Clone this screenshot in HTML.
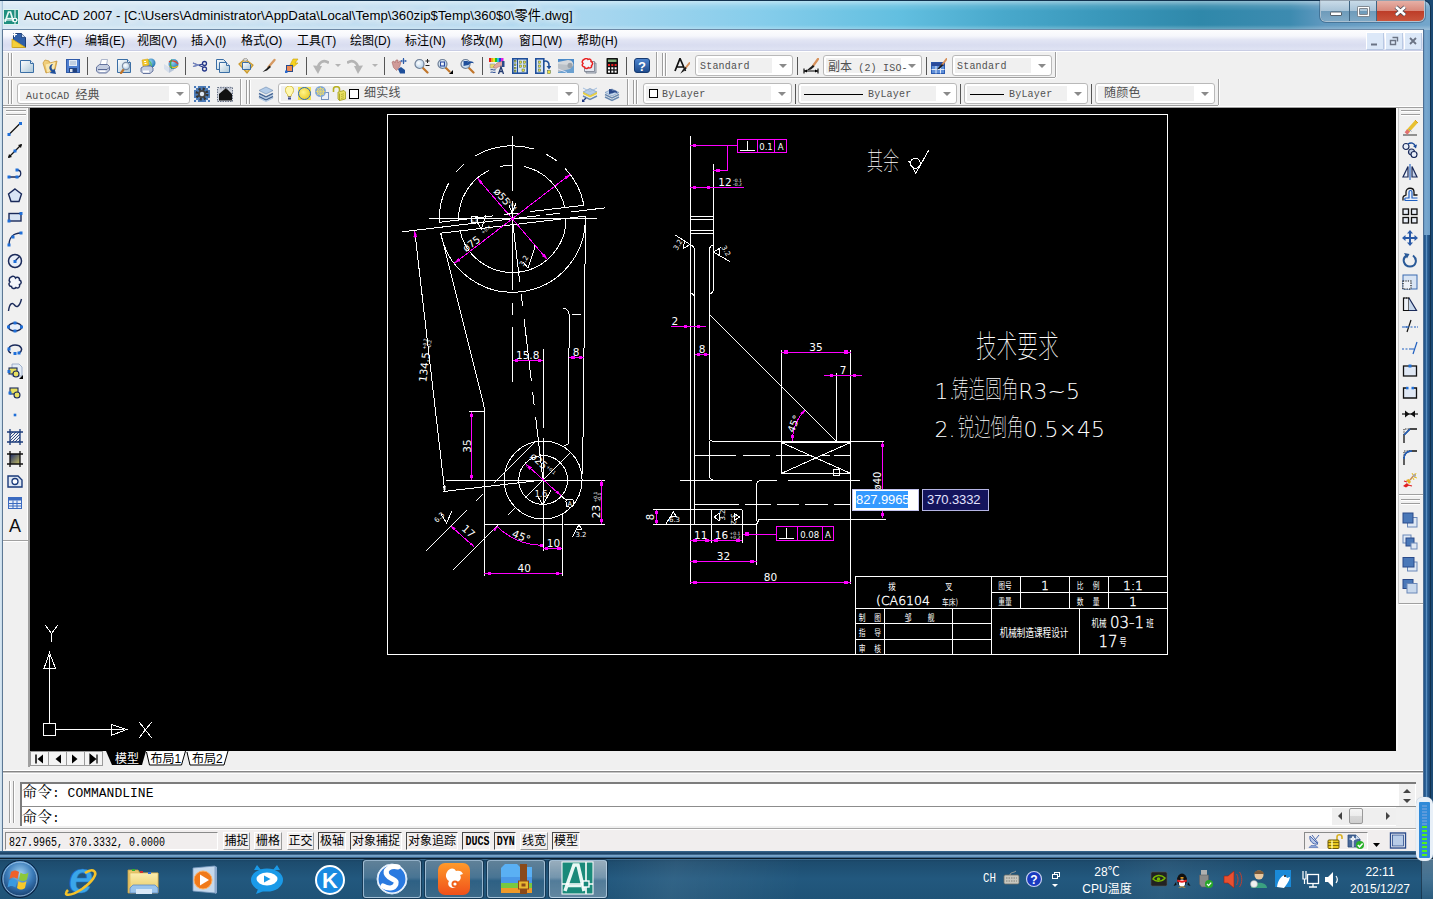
<!DOCTYPE html>
<html><head><meta charset="utf-8"><title>AutoCAD 2007</title>
<style>
html,body{margin:0;padding:0}
body{width:1433px;height:899px;position:relative;overflow:hidden;background:#1b4a74;font-family:"Liberation Sans","Noto Sans CJK SC",sans-serif;font-size:12px;color:#000}
.a{position:absolute}
.a svg{display:block}
#win{left:0;top:1px;width:1430px;height:857px;background:#6d9fc9;border-radius:0 7px 0 0;box-shadow:0 0 0 1px #12324f}
#title{left:0;top:1px;width:1430px;height:29px;border-radius:0 7px 0 0;
 background:linear-gradient(180deg,rgba(255,255,255,.45) 0,rgba(255,255,255,.12) 5px,rgba(255,255,255,0) 10px,rgba(255,255,255,0) 24px,rgba(255,255,255,.25) 28px),linear-gradient(90deg,#d6e7f3 0,#cde3f2 160px,#bddcf0 420px,#a6d6ef 600px,#86cdeb 760px,#62bfe0 900px,#49a9cc 1000px,#3a98bb 1100px,#2f88aa 1200px,#3d8bb0 1290px,#6199c0 1325px,#74a6cb 1430px)}
#titletxt{text-shadow:0 0 6px rgba(255,255,255,.9),0 0 10px rgba(255,255,255,.8),0 0 14px rgba(255,255,255,.6);left:24px;top:5px;font-size:13.25px;white-space:nowrap;color:#000;letter-spacing:0}
#client{left:3px;top:30px;width:1420px;height:821px;background:#f0f0f0}
#menubar{left:3px;top:30px;width:1420px;height:20px;background:linear-gradient(180deg,#fdfdfe 0,#f6f7fc 30%,#e2e5f4 50%,#d9ddf0 75%,#dfe3f3 100%);border-bottom:1px solid #c9cde4}
.mi{top:31px;font-size:12px;white-space:nowrap;color:#000}
#canvas{left:30px;top:108px;width:1366px;height:643px;background:#000}
.tbtxt{margin-top:1px;font-family:"Liberation Mono","Noto Sans CJK SC",monospace;font-size:10px;line-height:14px;letter-spacing:.2px;color:#505050;white-space:nowrap}
.cj{font-size:12px;letter-spacing:0;font-family:"Liberation Sans","Noto Sans CJK SC",sans-serif}
.combo{background:#fff;border:1px solid #b9b9b9;border-radius:3px;box-sizing:border-box;height:21px}
.combo .arr{position:absolute;right:5px;top:8px;width:0;height:0;border-left:4px solid transparent;border-right:4px solid transparent;border-top:4px solid #8a8a8a}
.combo .pad{position:absolute;left:2px;top:2px;bottom:2px;right:20px;background:#f0f0f0}
.vsep{width:1px;background:#555}
.grip{width:1px;background:#a0a0a0;box-shadow:1px 0 0 #fff}
.sb{top:832px;height:18px;font-size:12px;line-height:17px;white-space:nowrap;text-align:center;box-sizing:border-box;font-family:"Liberation Sans","Noto Sans CJK SC",sans-serif}
.sb.up{border:1px solid;border-color:#fff #9a9a9a #9a9a9a #fff}
.sb.dn{border:1px solid;border-color:#444 #fff #fff #444}
</style></head><body>
<div class="a" id="win"></div>
<div class="a" id="title"></div>
<div class="a" id="titletxt">AutoCAD 2007 - [C:\Users\Administrator\AppData\Local\Temp\360zip$Temp\360$0\零件.dwg]</div>
<div class="a" id="client"></div>
<div class="a" id="menubar"></div>
<div class="a mi" style="left:33px">文件(F)</div>
<div class="a mi" style="left:85px">编辑(E)</div>
<div class="a mi" style="left:137px">视图(V)</div>
<div class="a mi" style="left:191px">插入(I)</div>
<div class="a mi" style="left:241px">格式(O)</div>
<div class="a mi" style="left:297px">工具(T)</div>
<div class="a mi" style="left:350px">绘图(D)</div>
<div class="a mi" style="left:405px">标注(N)</div>
<div class="a mi" style="left:461px">修改(M)</div>
<div class="a mi" style="left:519px">窗口(W)</div>
<div class="a mi" style="left:577px">帮助(H)</div>
<div class="a" id="canvas"></div>
<div class="a" style="left:0;top:1px;width:3px;height:857px;background:linear-gradient(90deg,#dbe9f3,#c4d9e9 70%,#8fb0cc)"></div>
<div class="a" style="left:1423px;top:30px;width:7px;height:205px;background:linear-gradient(90deg,#5d8fbb,#79a8cf 40%,#6d9ec8)"></div>
<div class="a" style="left:1423px;top:235px;width:7px;height:623px;background:linear-gradient(90deg,#1d4c7e,#2a5f94 35%,#5b8fc0 50%,#2a5f94 65%,#1b4674)"></div>
<!-- app icon -->
<svg class="a" style="left:3px;top:9px" width="16" height="16" viewBox="0 0 16 16"><rect x="0" y="0" width="16" height="16" fill="#1f8f7f"/><rect x=".5" y=".5" width="15" height="15" fill="none" stroke="#dff3ee" stroke-width="1"/><path d="M2 13l3.500-10h2l3 10" fill="none" stroke="#e8f8f4" stroke-width="1.700"/><path d="M3 9.500h6" stroke="#e8f8f4" stroke-width="1.300"/><path d="M12 1v14M1 11h14" stroke="#fff" stroke-width="1"/><rect x="10.500" y="9.500" width="3" height="3" fill="#1f8f7f" stroke="#fff" stroke-width=".9"/></svg>
<!-- menu doc icon -->
<svg class="a" style="left:11px;top:32px" width="16" height="17" viewBox="0 0 16 17"><path d="M2.500 1.500h8l4 4v10h-12z" fill="#2f5fa8" stroke="#1c3f7a" stroke-width="1"/><path d="M10.500 1.500v4h4" fill="#c8d8f0" stroke="#1c3f7a" stroke-width=".8"/><path d="M1 7l13.500 8.500h-13.500z" fill="#f4cf3a" stroke="#d8a818" stroke-width=".8"/><path d="M3.500 0v5M1 2.500h5" stroke="#fff" stroke-width="1"/><circle cx="3.500" cy="2.500" r="1.300" fill="#fff"/></svg>
<!-- caption buttons -->
<div class="a" style="left:1321px;top:1px;width:103px;height:20px;border-radius:0 0 5px 5px;box-shadow:0 0 0 1px rgba(255,255,255,.55),0 0 0 2px rgba(20,50,80,.35);overflow:hidden">
 <div class="a" style="left:0;top:0;width:28px;height:20px;background:linear-gradient(180deg,#c9dbe8 0,#a9c4d8 48%,#6e9bba 52%,#7fa9c6 100%);border-right:1px solid #3e6482"></div>
 <div class="a" style="left:29px;top:0;width:26px;height:20px;background:linear-gradient(180deg,#c9dbe8 0,#a9c4d8 48%,#6e9bba 52%,#7fa9c6 100%);border-right:1px solid #3e6482"></div>
 <div class="a" style="left:56px;top:0;width:47px;height:20px;background:linear-gradient(180deg,#e6b0a6 0,#d98a7c 48%,#bd3d28 52%,#c9553c 100%)"></div>
 <svg class="a" style="left:0;top:0" width="103" height="20" viewBox="0 0 103 20"><rect x="9.500" y="11" width="11" height="3.500" fill="#fff" stroke="#4a5560" stroke-width=".9" rx=".5"/><rect x="37.500" y="6.500" width="10" height="8" fill="none" stroke="#4a5560" stroke-width="3" rx=".5"/><rect x="37.500" y="6.500" width="10" height="8" fill="none" stroke="#fff" stroke-width="1.600"/><path d="M75 6l9 8M84 6l-9 8" stroke="#4a4a55" stroke-width="4.200"/><path d="M75 6l9 8M84 6l-9 8" stroke="#fff" stroke-width="2.600"/></svg>
</div>
<!-- MDI buttons -->
<svg class="a" style="left:1366px;top:32px" width="57" height="18" viewBox="0 0 57 18"><g fill="#dce8f8" stroke="#fff" stroke-width="1"><rect x=".5" y=".5" width="17" height="17"/><rect x="19.500" y=".5" width="17" height="17"/><rect x="38.500" y=".5" width="17" height="17"/></g><g fill="none" stroke="#b9c9e3" stroke-width="1"><path d="M17.500 1v16.500h-17M36.500 1v16.500h-17M55.500 1v16.500h-17"/></g><path d="M5 12.500h6" stroke="#6a7384" stroke-width="2"/><path d="M26.500 5.500h5v4M24.500 8.500h5v4h-5z" fill="none" stroke="#6a7384" stroke-width="1.400"/><path d="M44 6l6 6M50 6l-6 6" stroke="#6a7384" stroke-width="1.800"/></svg>
<div class="a" style="left:2px;top:29px;width:1px;height:823px;background:#5d7894"></div>
<div class="a" style="left:2px;top:29px;width:1422px;height:1px;background:#6d89a6"></div>
<div class="a" style="left:1423px;top:29px;width:1px;height:823px;background:#4d6f94"></div>

<svg width="0" height="0" style="position:absolute"><defs>
<linearGradient id="gpage" x1="0" y1="0" x2="1" y2="1"><stop offset="0" stop-color="#fff"/><stop offset="1" stop-color="#a9c6d8"/></linearGradient>
<linearGradient id="gfold" x1="0" y1="0" x2="1" y2="1"><stop offset="0" stop-color="#f6d98a"/><stop offset="1" stop-color="#d9a238"/></linearGradient>
<linearGradient id="gblue" x1="0" y1="0" x2="0" y2="1"><stop offset="0" stop-color="#4f86d0"/><stop offset="1" stop-color="#1d4a8c"/></linearGradient>
<radialGradient id="glens" cx=".4" cy=".4" r=".7"><stop offset="0" stop-color="#fff"/><stop offset="1" stop-color="#a8c8e4"/></radialGradient>
<radialGradient id="gsun" cx=".4" cy=".4" r=".7"><stop offset="0" stop-color="#fff48a"/><stop offset="1" stop-color="#e8c820"/></radialGradient>
<radialGradient id="gglobe" cx=".4" cy=".35" r=".7"><stop offset="0" stop-color="#8fd0f0"/><stop offset="1" stop-color="#1f6fb0"/></radialGradient>
</defs></svg>
<div class="a" style="left:3px;top:51px;width:1420px;height:1px;background:#fff"></div>
<div class="a" style="left:3px;top:77px;width:1052px;height:1px;background:#a0a0a0"></div>
<div class="a" style="left:3px;top:78px;width:1052px;height:1px;background:#fff"></div>
<div class="a" style="left:3px;top:105px;width:1215px;height:1px;background:#a0a0a0"></div>
<div class="a" style="left:3px;top:106px;width:1420px;height:1px;background:#fff"></div>
<div class="a" style="left:3px;top:107px;width:1420px;height:1px;background:#a0a0a0"></div>
<div class="a" style="left:8px;top:53px;width:1px;height:23px;background:#9d9d9d;box-shadow:1px 0 0 #fff"></div><div class="a" style="left:11px;top:53px;width:1px;height:23px;background:#9d9d9d;box-shadow:1px 0 0 #fff"></div>
<div class="a" style="left:19px;top:58px"><svg width="16" height="16" viewBox="0 0 16 16"><path d="M1.5 2.5h10l3 3v9h-13z" fill="url(#gpage)" stroke="#3a6ea5"/><path d="M11.5 2.5v3h3" fill="#e8f0f8" stroke="#3a6ea5"/></svg></div>
<div class="a" style="left:42px;top:58px"><svg width="16" height="16" viewBox="0 0 16 16"><path d="M1 5l2-3 4 1 1 2 7-2-2 9-9 3z" fill="url(#gfold)" stroke="#c9983a" stroke-width=".8"/><path d="M3.500 6.500l10-2.500-1.500 8-7 2.500z" fill="#f9e7ae"/><path d="M11 6c-4 .5-5 5-1.500 7.500l-2 1.500 6.500 1-1.500-5.500-1.500 1.500c-2-1.500-2-4 0-6z" fill="#1f4f9a"/></svg></div>
<div class="a" style="left:65px;top:58px"><svg width="16" height="16" viewBox="0 0 16 16"><rect x="1.500" y="1.500" width="13" height="13" fill="#4f7fd0" stroke="#2f5aa8"/><rect x="4" y="2" width="8" height="6" fill="#e4ecf6"/><path d="M5 4h6M5 6h6" stroke="#9fb2cc"/><rect x="4" y="10" width="8" height="4.500" fill="#20407c"/><rect x="5" y="11" width="2.500" height="3" fill="#dfe6f0"/></svg></div>
<div class="a" style="left:87px;top:57px;width:1px;height:18px;background:#555"></div>
<div class="a" style="left:95px;top:58px"><svg width="16" height="16" viewBox="0 0 16 16"><path d="M5 7l1.500-5.500h6l-1 5.500z" fill="#fff" stroke="#9aa6c0" stroke-width=".8"/><path d="M1.500 9l3-2.500h8l2 2v3.500l-3 3h-8l-2-2z" fill="#c4cde0" stroke="#5a6a96" stroke-width=".9"/><path d="M3 11.500h9l2-2" stroke="#5a6a96" fill="none"/><rect x="4.500" y="12.500" width="6" height="1.500" fill="#fff"/></svg></div>
<div class="a" style="left:116px;top:58px"><svg width="16" height="16" viewBox="0 0 16 16"><path d="M1.500 1.500h10l3 3v10h-13z" fill="url(#gpage)" stroke="#3a6ea5"/><path d="M11.500 1.500v3h3" fill="#e8f0f8" stroke="#3a6ea5"/><path d="M8 11l-3 4" stroke="#c0752a" stroke-width="2.200" stroke-linecap="round"/><circle cx="10" cy="8" r="3.600" fill="url(#glens)" stroke="#7d90a8" stroke-width="1.200"/></svg></div>
<div class="a" style="left:140px;top:58px"><svg width="16" height="16" viewBox="0 0 16 16"><circle cx="11" cy="5" r="4.500" fill="url(#gglobe)"/><path d="M8 2c3 2 4 5 3 8" stroke="#5fc06a" fill="none" stroke-width="1.300"/><path d="M1 10l3-2h7l2 2v3l-3 2.500h-7l-2-2z" fill="#c4cde0" stroke="#5a6a96" stroke-width=".9"/><rect x="3" y="12.500" width="6" height="2" fill="#fff"/><path d="M2 2l6-1 1 6-6 1z" fill="#f2c62a" stroke="#d8a818" stroke-width=".6"/><path d="M4 3.500h2M4.500 5.500h2" stroke="#fff"/></svg></div>
<div class="a" style="left:163px;top:58px"><svg width="16" height="16" viewBox="0 0 16 16"><path d="M1 6l5 3v6l-5-4z" fill="#d8e0ec"/><path d="M6 9l5-2v5l-5 3z" fill="#b9c6da"/><circle cx="10.500" cy="6" r="5" fill="url(#gglobe)"/><path d="M6 4c3-2 7-1 9 2" stroke="#e0402a" fill="none" stroke-width="1.200"/><path d="M6.500 8c3 2 6 2 8.500 0" stroke="#f0c020" fill="none" stroke-width="1.200"/><path d="M9 1.500c-2 3-2 6 0 9.500" stroke="#38b050" fill="none" stroke-width="1.200"/></svg></div>
<div class="a" style="left:185px;top:57px;width:1px;height:18px;background:#555"></div>
<div class="a" style="left:192px;top:58px"><svg width="16" height="16" viewBox="0 0 16 16"><path d="M1 5l10 4M1 8.500l10-2.500" stroke="#25388a" stroke-width="1.200" fill="none"/><circle cx="12.500" cy="5.500" r="2" fill="none" stroke="#25388a" stroke-width="1.300"/><circle cx="12.500" cy="11" r="2" fill="none" stroke="#25388a" stroke-width="1.300"/><path d="M1 5l6 2.400M1 8.500l6-1.400" stroke="#8fa0d0" stroke-width=".8"/></svg></div>
<div class="a" style="left:215px;top:58px"><svg width="16" height="16" viewBox="0 0 16 16"><path d="M1.500 1.500h7l3 3v7h-10z" fill="url(#gpage)" stroke="#3a6ea5"/><path d="M4.500 4.500h7l3 3v7h-10z" fill="url(#gpage)" stroke="#3a6ea5"/><path d="M11.500 4.500v3h3" fill="#e8f0f8" stroke="#3a6ea5"/></svg></div>
<div class="a" style="left:238px;top:58px"><svg width="16" height="16" viewBox="0 0 16 16"><path d="M1 6l6-5 8 6-6 8z" fill="#e9c469" stroke="#c99a30" stroke-width="1.200"/><path d="M5 1.500l3-1.500 2 2-3 1.500z" fill="#d8d8d8" stroke="#8a8a8a" stroke-width=".6"/><path d="M4.500 4.500h6l2 2v5h-8z" fill="url(#gpage)" stroke="#3a6ea5"/></svg></div>
<div class="a" style="left:261px;top:58px"><svg width="16" height="16" viewBox="0 0 16 16"><path d="M13.500 2l-6 7" stroke="#d69a62" stroke-width="2.400" stroke-linecap="round"/><path d="M8.500 7.500l1.500 1.500-4 3.500-4.500 1.500 3.500-3z" fill="#1a1a1a"/></svg></div>
<div class="a" style="left:284px;top:58px"><svg width="16" height="16" viewBox="0 0 16 16"><path d="M9 1h5l-3 4h3l-7 6 2-4h-3z" fill="#f6d21e" stroke="#c8a010" stroke-width=".6"/><rect x="2.500" y="7.500" width="6" height="6" fill="#f08a50" stroke="#2a4a8a"/><rect x="1" y="12.500" width="2.500" height="2.500" fill="#2a6ad0"/></svg></div>
<div class="a" style="left:306px;top:57px;width:1px;height:18px;background:#555"></div>
<div class="a" style="left:313px;top:58px"><svg width="16" height="16" viewBox="0 0 16 16"><path d="M5 11C5 4 11 1 16 5" fill="none" stroke="#b4b4b4" stroke-width="2.800"/><path d="M0 7.500l5 8.500l4-8z" fill="#b4b4b4"/></svg></div>
<div class="a" style="left:335px;top:64px;border-left:3px solid transparent;border-right:3px solid transparent;border-top:3px solid #b4b4b4"></div><div class="a" style="left:347px;top:58px"><svg width="16" height="16" viewBox="0 0 16 16"><path d="M11 11C11 4 5 1 0 5" fill="none" stroke="#b4b4b4" stroke-width="2.800"/><path d="M16 7.500l-5 8.500l-4-8z" fill="#b4b4b4"/></svg></div>
<div class="a" style="left:372px;top:64px;border-left:3px solid transparent;border-right:3px solid transparent;border-top:3px solid #b4b4b4"></div><div class="a" style="left:384px;top:57px;width:1px;height:18px;background:#555"></div>
<div class="a" style="left:391px;top:58px"><svg width="16" height="16" viewBox="0 0 16 16"><path d="M1 4l2-1 1 2 1-3 2 0 0 3 1.500-2 1.500 1-1.500 5-3 3.500-3-3z" fill="#d09a98" stroke="#a86a6a" stroke-width=".6"/><path d="M7 11l3-2 4 3v3.500h-5z" fill="#1f4f9a"/><path d="M12.500 0v6M9.500 3h6" stroke="#2a5aa8" stroke-width="1.100"/><path d="M12.500 0l-1 1.400h2zM12.500 6l-1-1.400h2zM9.500 3l1.400-1v2zM15.500 3l-1.400-1v2z" fill="#2a5aa8"/></svg></div>
<div class="a" style="left:414px;top:58px"><svg width="16" height="16" viewBox="0 0 16 16"><path d="M8.500 9.500l5 5" stroke="#c0752a" stroke-width="2.200" stroke-linecap="round"/><circle cx="5.500" cy="6" r="4.500" fill="url(#glens)" stroke="#6f7f96" stroke-width="1.200"/><path d="M11.500 3h4M13.500 1v4M11.500 7.500h4" stroke="#222" stroke-width="1"/></svg></div>
<div class="a" style="left:437px;top:58px"><svg width="16" height="16" viewBox="0 0 16 16"><path d="M8.500 9.500l4 4" stroke="#c0752a" stroke-width="2.200" stroke-linecap="round"/><circle cx="5.500" cy="6" r="4.500" fill="url(#glens)" stroke="#6f7f96" stroke-width="1.200"/><rect x="3.500" y="4" width="4" height="4" fill="none" stroke="#2a4aa0" stroke-width="1.100"/><path d="M16 12v4h-4z" fill="#000"/></svg></div>
<div class="a" style="left:460px;top:58px"><svg width="16" height="16" viewBox="0 0 16 16"><path d="M8.500 9.500l5 5" stroke="#c0752a" stroke-width="2.200" stroke-linecap="round"/><circle cx="5.500" cy="6" r="4.500" fill="url(#glens)" stroke="#6f7f96" stroke-width="1.200"/><path d="M3.500 8v-5l5 0-1.500 1.500c3-2 6-1.500 7 1-2-1-4-.5-5.500 1.500z" fill="#1f4f9a"/></svg></div>
<div class="a" style="left:482px;top:57px;width:1px;height:18px;background:#555"></div>
<div class="a" style="left:489px;top:58px"><svg width="16" height="16" viewBox="0 0 16 16"><rect x="0" y="0" width="2" height="4" fill="#e02020"/><rect x="2" y="0" width="2" height="4" fill="#f0a020"/><rect x="4" y="0" width="2" height="4" fill="#e8e820"/><rect x="6" y="0" width="2" height="4" fill="#20c020"/><rect x="8" y="0" width="2" height="4" fill="#20c0e0"/><rect x="10" y="0" width="2" height="4" fill="#2040e0"/><rect x="12" y="0" width="2.500" height="4" fill="#e020e0"/><path d="M1 6h5v4h-5z" fill="#e8d860" stroke="#8a9ab0" stroke-width=".6"/><path d="M4 9l4-4 6-2v5l-5 1-2 1.500z" fill="#e0a8a0" stroke="#a86a6a" stroke-width=".5"/><path d="M13 3h2.500v6h-2.500z" fill="#2a4a8a"/><path d="M1.500 12c2-1.500 3 1 5-.5M1.500 14.500c2-1.500 3 1 5-.5" stroke="#3a5a9a" fill="none" stroke-width="1.100"/><path d="M9.500 16l2.500-7 2.500 7M10.500 13.500h3" stroke="#223a70" fill="none" stroke-width="1.300"/></svg></div>
<div class="a" style="left:512px;top:58px"><svg width="16" height="16" viewBox="0 0 16 16"><rect x=".8" y=".8" width="14.400" height="14.400" fill="#d8e4f4" stroke="#1f4f9a" stroke-width="1.600"/><path d="M5.500 1v14" stroke="#1f4f9a" stroke-width="1"/><path d="M3 2v12" stroke="#1f4f9a" stroke-dasharray="1 1.500" stroke-width=".8"/><g fill="#f0e040" stroke="#4a6a40" stroke-width=".5"><rect x="2.500" y="2.500" width="1.500" height="1.500"/><rect x="2.500" y="6" width="1.500" height="1.500"/><rect x="2.500" y="9.500" width="1.500" height="1.500"/><rect x="2.500" y="12.500" width="1.500" height="1.500"/><rect x="7.500" y="3" width="2.200" height="2.200"/><rect x="11.500" y="3" width="2.200" height="2.200"/><rect x="7.500" y="7" width="2.200" height="2.200"/><rect x="11.500" y="7" width="2.200" height="2.200"/><rect x="10" y="11" width="2.500" height="2.500"/></g></svg></div>
<div class="a" style="left:535px;top:58px"><svg width="16" height="16" viewBox="0 0 16 16"><rect x=".8" y=".8" width="8" height="14.400" fill="#d8e4f4" stroke="#1f4f9a" stroke-width="1.600"/><g fill="#f0e040" stroke="#4a6a40" stroke-width=".5"><rect x="3.500" y="3" width="2.200" height="2.200"/><rect x="3.500" y="7" width="2.200" height="2.200"/><rect x="3.500" y="11" width="2.200" height="2.200"/><rect x="12.500" y="12.500" width="3" height="3"/></g><path d="M8.500 3.500c3-1.500 6 .5 5.500 4.500" fill="none" stroke="#1f4f9a" stroke-width="1.600"/><path d="M11.500 8h5l-2.500 3.500z" fill="#1f4f9a"/></svg></div>
<div class="a" style="left:558px;top:58px"><svg width="16" height="16" viewBox="0 0 16 16"><rect x="0" y="1" width="16" height="14" fill="#6aa0d0"/><path d="M0 1h16v5l-16 6z" fill="#4a8ac8"/><path d="M0 4l10-2c4 0 6 3 5 6l-6 3-9-3z" fill="#d4d8dc"/><path d="M0 6l11 1c2 1 3 3 1 4l-12 3z" fill="#bcc2c8"/><ellipse cx="12" cy="7.500" rx="2.500" ry="2.800" fill="#9aa2aa"/><path d="M0 11l9 3.500" stroke="#eef" stroke-width=".8"/></svg></div>
<div class="a" style="left:581px;top:58px"><svg width="16" height="16" viewBox="0 0 16 16"><path d="M5 5h10v10h-10z" fill="#d0d4dc" stroke="#707888" stroke-width=".8"/><path d="M3.500 3.500h10v10h-10z" fill="#e4e8f0" stroke="#707888" stroke-width=".8"/><path d="M3 1.500c1.500-1.500 3.500-1 4 0 1.500-1 3.500 0 3 2 2 .5 2 3 .5 4 .5 2-1.500 3-3 2-1 1.500-3.500 1.500-4-.5-2 0-3-2-1.500-3.500-1.500-1.500-.5-3.500 1-4z" fill="#f4f4f8" stroke="#e82020" stroke-width="1.500"/></svg></div>
<div class="a" style="left:604px;top:58px"><svg width="16" height="16" viewBox="0 0 16 16"><rect x="2.500" y="0" width="11.500" height="16" rx=".8" fill="#111"/><rect x="4" y="1.500" width="8.500" height="2.500" fill="#7fb07a"/><g fill="#e82020"><rect x="4" y="6" width="2" height="2"/><rect x="7.300" y="6" width="2" height="2"/><rect x="10.600" y="6" width="2" height="2"/></g><g fill="#fff"><rect x="4" y="9.300" width="2" height="2"/><rect x="7.300" y="9.300" width="2" height="2"/><rect x="10.600" y="9.300" width="2" height="2"/><rect x="4" y="12.600" width="2" height="2"/><rect x="7.300" y="12.600" width="2" height="2"/><rect x="10.600" y="12.600" width="2" height="2"/></g></svg></div>
<div class="a" style="left:626px;top:57px;width:1px;height:18px;background:#555"></div>
<div class="a" style="left:634px;top:58px"><svg width="16" height="16" viewBox="0 0 16 16"><rect x=".5" y=".5" width="15" height="14" rx="2.500" fill="url(#gblue)" stroke="#163a70"/><text x="8" y="12.500" font-size="13" font-weight="bold" fill="#fff" text-anchor="middle" font-family="Liberation Sans,sans-serif">?</text></svg></div>
<div class="a" style="left:656px;top:52px;width:1px;height:25px;background:#a0a0a0;box-shadow:1px 0 0 #fff"></div>
<div class="a" style="left:662px;top:53px;width:1px;height:23px;background:#9d9d9d;box-shadow:1px 0 0 #fff"></div><div class="a" style="left:665px;top:53px;width:1px;height:23px;background:#9d9d9d;box-shadow:1px 0 0 #fff"></div>
<div class="a" style="left:674px;top:58px"><svg width="16" height="16" viewBox="0 0 16 16"><path d="M1 13l5-12.500 5.500 12.500M3 9h6.500" fill="none" stroke="#111" stroke-width="1.700"/><path d="M15.500 5l-4 5" stroke="#d6905a" stroke-width="2" stroke-linecap="round"/><path d="M11.500 9l1.200 1.200-3 3-3.500 2.500 2.500-4z" fill="#1a1a1a"/></svg></div>
<div class="a combo" style="left:695px;top:55px;width:98px;height:21px"><div class="pad" style="right:20px"></div><div class="arr"></div><div class="a tbtxt" style="left:4px;top:3px">Standard</div></div>
<div class="a" style="left:797px;top:57px;width:1px;height:18px;background:#555"></div>
<div class="a" style="left:803px;top:58px"><svg width="16" height="16" viewBox="0 0 16 16"><path d="M15 1l-5 7" stroke="#d6905a" stroke-width="2.200" stroke-linecap="round"/><path d="M10 7l1.500 1.500-3.500 3-4.500 1 3.500-3z" fill="#1a1a1a"/><path d="M1 10.500v5M15 10.500v5M1 13h14" stroke="#000" stroke-width="1.100" fill="none"/><path d="M1 13l3-1.500v3zM15 13l-3-1.500v3z" fill="#000"/></svg></div>
<div class="a combo" style="left:823px;top:55px;width:99px;height:21px"><div class="pad" style="right:20px"></div><div class="arr"></div><div class="a tbtxt" style="left:4px;top:3px"><span class="cj">副本</span> (2) ISO-</div></div>
<div class="a" style="left:926px;top:57px;width:1px;height:18px;background:#555"></div>
<div class="a" style="left:931px;top:58px"><svg width="16" height="16" viewBox="0 0 16 16"><rect x="0.500" y="4.500" width="13" height="11" fill="#5f8fd8" stroke="#2a5ab0"/><rect x=".5" y="4.500" width="13" height="3.500" fill="#2a4a9a"/><path d="M.5 11.500h13M5 8v7.500M9.500 8v7.500" stroke="#dfe8f8" stroke-width="1"/><path d="M15.500 1l-4.500 6" stroke="#d6905a" stroke-width="2" stroke-linecap="round"/><path d="M11 6l1.200 1.200-3 3-3.500 1.500 2.500-3z" fill="#1a1a1a"/></svg></div>
<div class="a combo" style="left:952px;top:55px;width:100px;height:21px"><div class="pad" style="right:20px"></div><div class="arr"></div><div class="a tbtxt" style="left:4px;top:3px">Standard</div></div>
<div class="a" style="left:1055px;top:52px;width:1px;height:25px;background:#a0a0a0;box-shadow:1px 0 0 #fff"></div>
<div class="a" style="left:8px;top:80px;width:1px;height:24px;background:#9d9d9d;box-shadow:1px 0 0 #fff"></div><div class="a" style="left:11px;top:80px;width:1px;height:24px;background:#9d9d9d;box-shadow:1px 0 0 #fff"></div>
<div class="a combo" style="left:17px;top:83px;width:173px;height:21px"><div class="pad" style="right:20px"></div><div class="arr"></div><div class="a tbtxt" style="left:8px;top:3px">AutoCAD <span class="cj">经典</span></div></div>
<div class="a" style="left:194px;top:86px"><svg width="16" height="16" viewBox="0 0 16 16"><rect x="0" y="0" width="16" height="16" fill="#4a7ab8"/><g fill="#dfe8f4"><rect x="2" y="0" width="2" height="2"/><rect x="12" y="0" width="2" height="2"/><rect x="2" y="14" width="2" height="2"/><rect x="12" y="14" width="2" height="2"/><rect x="0" y="2" width="2" height="2"/><rect x="0" y="12" width="2" height="2"/><rect x="14" y="2" width="2" height="2"/><rect x="14" y="12" width="2" height="2"/></g><circle cx="8" cy="8" r="5" fill="none" stroke="#333" stroke-width="3" stroke-dasharray="2 1.930"/><circle cx="8" cy="8" r="4" fill="#444"/><circle cx="8" cy="8" r="2.200" fill="#dfe8f4"/></svg></div>
<div class="a" style="left:217px;top:86px"><svg width="16" height="16" viewBox="0 0 16 16"><rect x=".5" y="1.500" width="15" height="14" fill="#d0d4dc" stroke="#6a7488" stroke-dasharray="1.500 1"/><path d="M2 8l7-6 6 6v6.500h-13z" fill="#111"/><path d="M4 .5v3M7 .5v3M10 .5v3M13 .5v3" stroke="#8a94a8" stroke-width=".8"/></svg></div>
<div class="a" style="left:240px;top:79px;width:1px;height:26px;background:#a0a0a0;box-shadow:1px 0 0 #fff"></div>
<div class="a" style="left:246px;top:80px;width:1px;height:24px;background:#9d9d9d;box-shadow:1px 0 0 #fff"></div><div class="a" style="left:249px;top:80px;width:1px;height:24px;background:#9d9d9d;box-shadow:1px 0 0 #fff"></div>
<div class="a" style="left:258px;top:86px"><svg width="16" height="16" viewBox="0 0 16 16"><path d="M1 4.500l7-3.500 7 3.500-7 3.500z" fill="#b4cce8" stroke="#6a8ab0" stroke-width=".6"/><path d="M1 7.500l7 3.500 7-3.500" fill="none" stroke="#4a6a98" stroke-width="1.500"/><path d="M1 10.500l7 3.500 7-3.500" fill="none" stroke="#4a6a98" stroke-width="1.500"/><path d="M1 9l7 3.500 7-3.500M1 12l7 3.500 7-3.500" fill="none" stroke="#a4c0e0" stroke-width="1"/></svg></div>
<div class="a combo" style="left:278px;top:83px;width:301px;height:21px"><div class="pad" style="right:20px"></div><div class="arr"></div><div class="a tbtxt" style="left:85px;top:1px;font-size:12px;font-family:'Liberation Sans','Noto Sans CJK SC',sans-serif">细实线</div></div>
<div class="a" style="left:285px;top:86px"><svg width="10" height="14" viewBox="0 0 10 14"><path d="M4.500 0c-5 0-5 6-2 8.500l.5 2h3l.5-2c3-2.500 3-8.500-2-8.500z" fill="#fff8b0" stroke="#d8c040" stroke-width="1"/><rect x="3" y="10.500" width="3" height="3" fill="#3a4a8a"/><path d="M3 11.500h3" stroke="#c0c8e0" stroke-width=".6"/></svg></div>
<div class="a" style="left:298px;top:86px"><svg width="14" height="15" viewBox="0 0 14 15"><rect x="0" y="1" width="13" height="13" fill="#f0e050"/><circle cx="6.500" cy="7.500" r="6" fill="url(#gsun)" stroke="#2a6ac0" stroke-width="1"/></svg></div>
<div class="a" style="left:315px;top:86px"><svg width="14" height="14" viewBox="0 0 14 14"><rect x="6.500" y="6.500" width="7" height="7" fill="#eef2f8" stroke="#6a88b8" stroke-width=".9"/><circle cx="5.500" cy="5.500" r="5.500" fill="#7fa6d8"/><circle cx="5.500" cy="5.500" r="3" fill="none" stroke="#e8d870" stroke-width="1.200"/><path d="M5.500 .5v10M.5 5.500h10M2 2l7 7M9 2l-7 7" stroke="#e8d870" stroke-width=".7"/></svg></div>
<div class="a" style="left:332px;top:86px"><svg width="14" height="15" viewBox="0 0 14 15"><path d="M1.500 6v-3c0-3 6-3 6 0v2" fill="none" stroke="#b8b020" stroke-width="1.600"/><path d="M6 6l6-1.500 1.500 1.500v7l-6 1.500-1.500-1.500z" fill="#e8e060" stroke="#a09a18" stroke-width=".8"/><path d="M7.500 7.500v7" stroke="#a09a18" stroke-width=".8"/><path d="M9 8.500l3-.8M9 10.500l3-.8M9 12.500l3-.8" stroke="#a09a18" stroke-width=".6"/></svg></div>
<div class="a" style="left:349px;top:89px;width:8px;height:8px;border:1px solid #000;background:#fff"></div>
<div class="a" style="left:582px;top:86px"><svg width="16" height="16" viewBox="0 0 16 16"><path d="M1 6l7-3.500 7 3.500-7 3.500z" fill="#b4cce8" stroke="#6a8ab0" stroke-width=".6"/><path d="M1 6l7 3.500 7-3.500v2l-7 3.500-7-3.500z" fill="#e8d040"/><path d="M1 10l7 3.500 7-3.500" fill="none" stroke="#6a8ab0" stroke-width="1.400"/><path d="M1 1l7 3.500 7-3.500" fill="none" stroke="#a4c0e0" stroke-width="1" transform="translate(0,1)"/><path d="M0 16l4-4" stroke="#203a80" stroke-width="1.300"/><path d="M0 16v-3l3 3z" fill="#203a80"/></svg></div>
<div class="a" style="left:604px;top:86px"><svg width="16" height="16" viewBox="0 0 16 16"><path d="M1 8.500l7 3.500 7-3.500M1 11l7 3.500 7-3.500" fill="none" stroke="#6a8ab0" stroke-width="1.400"/><path d="M1 6.500l7-3.500 7 3.500-7 3.500z" fill="#c4d8ee" stroke="#6a8ab0" stroke-width=".6"/><path d="M5 8v-5l4 .5-1.300 1.200c3-1 5.500 0 6 3-1.500-1.500-3.500-1.500-5-.5z" fill="#2a4a8a"/></svg></div>
<div class="a" style="left:627px;top:79px;width:1px;height:26px;background:#a0a0a0;box-shadow:1px 0 0 #fff"></div>
<div class="a" style="left:633px;top:80px;width:1px;height:24px;background:#9d9d9d;box-shadow:1px 0 0 #fff"></div><div class="a" style="left:636px;top:80px;width:1px;height:24px;background:#9d9d9d;box-shadow:1px 0 0 #fff"></div>
<div class="a combo" style="left:643px;top:83px;width:149px;height:21px"><div class="pad" style="right:20px"></div><div class="arr"></div><div class="a" style="left:5px;top:5px;width:7px;height:7px;border:1px solid #000;background:#fff"></div><div class="a tbtxt" style="left:18px;top:3px">ByLayer</div></div>
<div class="a" style="left:795px;top:84px;width:1px;height:20px;background:#555"></div>
<div class="a combo" style="left:798px;top:83px;width:159px;height:21px"><div class="pad" style="right:20px"></div><div class="arr"></div><div class="a" style="left:5px;top:10px;width:59px;height:1px;background:#000"></div><div class="a tbtxt" style="left:69px;top:3px">ByLayer</div></div>
<div class="a" style="left:960px;top:84px;width:1px;height:20px;background:#555"></div>
<div class="a combo" style="left:964px;top:83px;width:124px;height:21px"><div class="pad" style="right:20px"></div><div class="arr"></div><div class="a" style="left:5px;top:10px;width:34px;height:1px;background:#000"></div><div class="a tbtxt" style="left:44px;top:3px">ByLayer</div></div>
<div class="a" style="left:1091px;top:84px;width:1px;height:20px;background:#555"></div>
<div class="a combo" style="left:1095px;top:83px;width:120px;height:21px"><div class="pad" style="right:20px"></div><div class="arr"></div><div class="a tbtxt" style="left:8px;top:1px;font-size:12px;font-family:'Liberation Sans','Noto Sans CJK SC',sans-serif">随颜色</div></div>
<div class="a" style="left:1218px;top:79px;width:1px;height:26px;background:#a0a0a0;box-shadow:1px 0 0 #fff"></div>
<div class="a" style="left:27px;top:108px;width:1px;height:433px;background:#fff"></div><div class="a" style="left:28px;top:108px;width:2px;height:659px;background:#a0a0a0"></div>
<div class="a" style="left:3px;top:540px;width:25px;height:1px;background:#a0a0a0"></div><div class="a" style="left:3px;top:541px;width:25px;height:1px;background:#fff"></div>
<div class="a" style="left:6px;top:110px;width:20px;height:1px;background:#9d9d9d;box-shadow:0 1px 0 #fff"></div>
<div class="a" style="left:6px;top:114px;width:20px;height:1px;background:#9d9d9d;box-shadow:0 1px 0 #fff"></div>
<div class="a" style="left:7px;top:121px"><svg width="16" height="16" viewBox="0 0 16 16"><path d="M2 13.500l11-11" stroke="#111" stroke-width="1.300"/><rect x="0.5" y="12.0" width="3" height="3" fill="#1f6fd8"/><rect x="12.0" y="1.0" width="3" height="3" fill="#1f6fd8"/></svg></div>
<div class="a" style="left:7px;top:143px"><svg width="16" height="16" viewBox="0 0 16 16"><path d="M1.500 14.500l13-13" stroke="#111" stroke-width="1.300"/><path d="M1 15l1-4 3 3zM15 1l-1 4-3-3z" fill="#111"/><rect x="6.5" y="6.5" width="3" height="3" fill="#1f6fd8"/></svg></div>
<div class="a" style="left:7px;top:165px"><svg width="16" height="16" viewBox="0 0 16 16"><path d="M2 12h8c5 0 5-7 0-7" fill="none" stroke="#1a2a5a" stroke-width="1.300"/><rect x="0.5" y="10.5" width="3" height="3" fill="#1f6fd8"/><rect x="8.5" y="10.5" width="3" height="3" fill="#1f6fd8"/><rect x="8.5" y="3.5" width="3" height="3" fill="#1f6fd8"/></svg></div>
<div class="a" style="left:7px;top:187px"><svg width="16" height="16" viewBox="0 0 16 16"><path d="M8 2l6.500 5-2.500 7.500h-8l-2.500-7.500z" fill="#d8e4f4" stroke="#1a2a5a" stroke-width="1.400"/></svg></div>
<div class="a" style="left:7px;top:209px"><svg width="16" height="16" viewBox="0 0 16 16"><rect x="2" y="4.500" width="12" height="7.500" fill="#d8e4f4" stroke="#1a2a5a" stroke-width="1.400"/><rect x="0.5" y="10.5" width="3" height="3" fill="#1f6fd8"/><rect x="12.5" y="3.0" width="3" height="3" fill="#1f6fd8"/></svg></div>
<div class="a" style="left:7px;top:231px"><svg width="16" height="16" viewBox="0 0 16 16"><path d="M2 14c0-7 4-12 12-12" fill="none" stroke="#1a2a5a" stroke-width="1.400"/><rect x="0.5" y="12.5" width="3" height="3" fill="#1f6fd8"/><rect x="12.5" y="0.5" width="3" height="3" fill="#1f6fd8"/><rect x="4.5" y="4.5" width="3" height="3" fill="#1f6fd8"/></svg></div>
<div class="a" style="left:7px;top:253px"><svg width="16" height="16" viewBox="0 0 16 16"><circle cx="8" cy="8" r="6.500" fill="#e8eef8" stroke="#1a2a5a" stroke-width="1.500"/><path d="M8 8l4-4" stroke="#1a2a5a" stroke-width="1.200"/><rect x="6.5" y="7.0" width="3" height="3" fill="#1f6fd8"/></svg></div>
<div class="a" style="left:7px;top:275px"><svg width="16" height="16" viewBox="0 0 16 16"><path d="M4 2c2-1.500 4-.5 4.500 1 1.500-1.500 4.500-.5 4 2 2.500 1 2 4 0 4.500 1 2.500-1.500 4.500-3.500 3-1.500 2-4.500 1-4.500-1-2.500 0-3.500-3-1.500-4.500-2-2 0-5 1.500-5z" fill="#f4f6fa" stroke="#1a2a5a" stroke-width="1.500"/></svg></div>
<div class="a" style="left:7px;top:297px"><svg width="16" height="16" viewBox="0 0 16 16"><path d="M1.500 14c1-8 4-9 6-6s5 2 7-6" fill="none" stroke="#1a2a5a" stroke-width="1.400"/></svg></div>
<div class="a" style="left:7px;top:319px"><svg width="16" height="16" viewBox="0 0 16 16"><ellipse cx="8" cy="8" rx="6.500" ry="4" fill="#e8eef8" stroke="#1a2a5a" stroke-width="1.500"/><rect x="0.0" y="6.5" width="3" height="3" fill="#1f6fd8"/><rect x="13.0" y="6.5" width="3" height="3" fill="#1f6fd8"/><rect x="6.5" y="2.5" width="3" height="3" fill="#1f6fd8"/><rect x="6.5" y="10.5" width="3" height="3" fill="#1f6fd8"/></svg></div>
<div class="a" style="left:7px;top:341px"><svg width="16" height="16" viewBox="0 0 16 16"><path d="M4 12c-5-2-2-8 4-8s9 5 4 8" fill="none" stroke="#1a2a5a" stroke-width="1.500"/><rect x="0.5" y="6.5" width="3" height="3" fill="#1f6fd8"/><rect x="6.5" y="11.0" width="3" height="3" fill="#1f6fd8"/><rect x="10.5" y="10.5" width="3" height="3" fill="#1f6fd8"/></svg></div>
<div class="a" style="left:7px;top:363px"><svg width="16" height="16" viewBox="0 0 16 16"><path d="M5 1h7l3 3v9h-10z" fill="#e4ecf6" stroke="#8aa0c0" stroke-width=".8"/><rect x="2" y="5" width="8" height="6" fill="#e8e060" stroke="#1a2a5a" stroke-width="1.100"/><circle cx="9" cy="11" r="3" fill="#e8e060" stroke="#1a2a5a" stroke-width="1.100"/><path d="M16 12v4h-4z" fill="#000"/><rect x="0.5" y="7.0" width="3" height="3" fill="#1f6fd8"/></svg></div>
<div class="a" style="left:7px;top:385px"><svg width="16" height="16" viewBox="0 0 16 16"><rect x="3" y="3" width="8" height="6" fill="#e8e060" stroke="#1a2a5a" stroke-width="1.100"/><circle cx="10" cy="10" r="3" fill="#e8e060" stroke="#1a2a5a" stroke-width="1.100"/><rect x="1.5" y="6.5" width="3" height="3" fill="#1f6fd8"/></svg></div>
<div class="a" style="left:7px;top:407px"><svg width="16" height="16" viewBox="0 0 16 16"><rect x="6.7" y="6.7" width="2.6" height="2.6" fill="#1f6fd8"/></svg></div>
<div class="a" style="left:7px;top:429px"><svg width="16" height="16" viewBox="0 0 16 16"><path d="M3 0v16M13 0v16M0 3h16M0 13h16" stroke="#1a3a7a" stroke-width="1.300"/><path d="M3 6l3-3M3 9l6-6M3 12l9-9M5 13l8-8M8 13l5-5M11 13l2-2" stroke="#1a3a7a" stroke-width=".9"/></svg></div>
<div class="a" style="left:7px;top:451px"><svg width="16" height="16" viewBox="0 0 16 16"><defs><linearGradient id="ggr" x1="0" y1="0" x2="1" y2="1"><stop offset="0" stop-color="#1a2a6a"/><stop offset="1" stop-color="#c8c060"/></linearGradient></defs><rect x="3" y="3" width="10" height="10" fill="url(#ggr)"/><path d="M3 0v16M13 0v16M0 3h16M0 13h16" stroke="#111" stroke-width="1.300"/></svg></div>
<div class="a" style="left:7px;top:473px"><svg width="16" height="16" viewBox="0 0 16 16"><path d="M1 3h10l4 4v7h-14z" fill="#dfe8f4" stroke="#1a3a7a" stroke-width="1.400"/><circle cx="8" cy="8.500" r="3" fill="#fff" stroke="#1a3a7a" stroke-width="1.300"/></svg></div>
<div class="a" style="left:7px;top:495px"><svg width="16" height="16" viewBox="0 0 16 16"><rect x="1.500" y="2.500" width="13" height="11" fill="#e8eef8" stroke="#3a6ac0"/><rect x="1.500" y="2.500" width="13" height="3" fill="#3a6ac0"/><path d="M1.500 8.500h13M1.500 11h13M6 5.500v8M10 5.500v8" stroke="#3a6ac0" stroke-width="1"/></svg></div>
<div class="a" style="left:7px;top:517px"><svg width="16" height="16" viewBox="0 0 16 16"><text x="8" y="15" font-size="18" text-anchor="middle" fill="#111" font-family="Liberation Sans,sans-serif">A</text></svg></div>
<div class="a" style="left:1396px;top:108px;width:2px;height:642px;background:#fafafa"></div>
<div class="a" style="left:1398px;top:108px;width:1px;height:496px;background:#c8c8c8"></div>
<div class="a" style="left:1401px;top:110px;width:19px;height:1px;background:#9d9d9d;box-shadow:0 1px 0 #fff"></div>
<div class="a" style="left:1401px;top:114px;width:19px;height:1px;background:#9d9d9d;box-shadow:0 1px 0 #fff"></div>
<div class="a" style="left:1402px;top:120px"><svg width="16" height="16" viewBox="0 0 16 16"><path d="M1 15h14" stroke="#333" stroke-width="1"/><path d="M14.500 1.500l-9 10" stroke="#e8c030" stroke-width="3.600"/><path d="M6.500 10.500l-2.500 3" stroke="#e07070" stroke-width="3.600"/><path d="M7 9l2.500 2.500" stroke="#8aa0c0" stroke-width="1"/><path d="M13 0l3 3" stroke="#d8a020" stroke-width="1"/></svg></div>
<div class="a" style="left:1402px;top:142px"><svg width="16" height="16" viewBox="0 0 16 16"><circle cx="4" cy="4.500" r="3" fill="#e8eef8" stroke="#1a2a5a" stroke-width="1.200"/><circle cx="9.500" cy="10" r="3" fill="#c8d4e8" stroke="#1a2a5a" stroke-width="1.200"/><circle cx="12" cy="12.500" r="3" fill="#e8eef8" stroke="#1a2a5a" stroke-width="1.200"/><path d="M6 2c3-2 6-1 7.500 2" fill="none" stroke="#1a4a9a" stroke-width="1.400"/><path d="M15 2.500l-1 4-3-2.500z" fill="#1a4a9a"/></svg></div>
<div class="a" style="left:1402px;top:164px"><svg width="16" height="16" viewBox="0 0 16 16"><path d="M8 0v16" stroke="#1f5fc0" stroke-width="1.100"/><path d="M6 2.500v10.500h-5z" fill="#e8eef8" stroke="#1a2a5a" stroke-width="1.200"/><path d="M10 2.500v10.500h5z" fill="#c8d4e8" stroke="#1a2a5a" stroke-width="1.200"/></svg></div>
<div class="a" style="left:1402px;top:186px"><svg width="16" height="16" viewBox="0 0 16 16"><path d="M1 14.500v-3c0-2 2-2 3-2.500v-3c0-5 8-5 8 0v3h3.500" fill="none" stroke="#111" stroke-width="1.300"/><path d="M15.500 14.500h-12c-1 0-1-2.500 0-2.500h3.500v-6c0-2 3-2 3 0v6h5.500" fill="#e8f0fc" stroke="#1f5fc0" stroke-width="1.200"/></svg></div>
<div class="a" style="left:1402px;top:208px"><svg width="16" height="16" viewBox="0 0 16 16"><g fill="#e8eef8" stroke="#111" stroke-width="1.300"><rect x="1" y="1" width="5.500" height="5.500"/><rect x="9.500" y="1" width="5.500" height="5.500"/><rect x="1" y="9.500" width="5.500" height="5.500"/><rect x="9.500" y="9.500" width="5.500" height="5.500"/></g></svg></div>
<div class="a" style="left:1402px;top:230px"><svg width="16" height="16" viewBox="0 0 16 16"><path d="M8 1v14M1 8h14" stroke="#2a5aa8" stroke-width="2"/><path d="M8 0l-3 3.500h6zM8 16l-3-3.500h6zM0 8l3.500-3v6zM16 8l-3.500-3v6z" fill="#2a5aa8"/></svg></div>
<div class="a" style="left:1402px;top:252px"><svg width="16" height="16" viewBox="0 0 16 16"><path d="M5 3.500c-6 3-3 11 3 11s8-7 3-11" fill="none" stroke="#2a5a98" stroke-width="2"/><path d="M2 1l5.500 1-2.500 4.500z" fill="#2a5a98"/></svg></div>
<div class="a" style="left:1402px;top:274px"><svg width="16" height="16" viewBox="0 0 16 16"><rect x="1" y="1" width="14" height="14" fill="#d8e4f4" stroke="#3a6ab0" stroke-width="1"/><rect x="1" y="7" width="8" height="8" fill="#eef2f8" stroke="#111" stroke-width="1.200" stroke-dasharray="1.200 1.200"/></svg></div>
<div class="a" style="left:1402px;top:296px"><svg width="16" height="16" viewBox="0 0 16 16"><path d="M1.500 2v12.500h5.500v-12.500z" fill="#eef2f8" stroke="#111" stroke-width="1.200"/><path d="M7 2l7.500 12.500h-7.500" fill="#c8d8ec" stroke="#1a2a5a" stroke-width="1.200"/><path d="M1.500 2h5.500" stroke="#111" stroke-dasharray="1.200 1.200"/></svg></div>
<div class="a" style="left:1402px;top:318px"><svg width="16" height="16" viewBox="0 0 16 16"><path d="M0 9h5M8.500 9h2M12 9h2M15 9h1" stroke="#1f5fc0" stroke-width="1.200"/><path d="M9 2l-4 12" stroke="#111" stroke-width="1.200"/><path d="M4 9h3" stroke="#1f5fc0" stroke-width="1.200"/></svg></div>
<div class="a" style="left:1402px;top:340px"><svg width="16" height="16" viewBox="0 0 16 16"><path d="M0 9h2M3.500 9h2M7 9h3" stroke="#1f5fc0" stroke-width="1.200"/><path d="M15 2l-4 12" stroke="#1f5fc0" stroke-width="1.200"/><path d="M10 9h2" stroke="#1f5fc0" stroke-width="1.200"/></svg></div>
<div class="a" style="left:1402px;top:362px"><svg width="16" height="16" viewBox="0 0 16 16"><rect x="1.500" y="4" width="13" height="10" fill="#e0e8f4" stroke="#111" stroke-width="1.300"/><rect x="6.500" y="2.500" width="3" height="3" fill="#1f6fd8"/></svg></div>
<div class="a" style="left:1402px;top:384px"><svg width="16" height="16" viewBox="0 0 16 16"><path d="M5 4h-3.500v10h13v-10h-3.500" fill="#e0e8f4" stroke="#111" stroke-width="1.300"/><rect x="4" y="2.800" width="2.500" height="2.500" fill="#1f6fd8"/><rect x="9.500" y="2.800" width="2.500" height="2.500" fill="#1f6fd8"/></svg></div>
<div class="a" style="left:1402px;top:406px"><svg width="16" height="16" viewBox="0 0 16 16"><path d="M0 8h16" stroke="#111" stroke-width="1.200"/><path d="M3 4.500l4.500 3.500-4.500 3.500zM13 4.500l-4.500 3.500 4.500 3.500z" fill="#111"/></svg></div>
<div class="a" style="left:1402px;top:428px"><svg width="16" height="16" viewBox="0 0 16 16"><path d="M2 15v-8l6-6h7" fill="none" stroke="#111" stroke-width="1.300"/><path d="M2 7v-6h6" fill="none" stroke="#111" stroke-dasharray="1.200 1.200"/><path d="M2 7l6-6" stroke="#1f5fc0" stroke-width="1.400"/></svg></div>
<div class="a" style="left:1402px;top:450px"><svg width="16" height="16" viewBox="0 0 16 16"><path d="M2 15v-6c0-5 3-8 8-8h5" fill="none" stroke="#111" stroke-width="1.300"/><path d="M2 8v-7h7" fill="none" stroke="#111" stroke-dasharray="1.200 1.200"/><path d="M2 9c0-5 3-8 8-8" fill="none" stroke="#1f5fc0" stroke-width="1.500"/></svg></div>
<div class="a" style="left:1402px;top:472px"><svg width="16" height="16" viewBox="0 0 16 16"><path d="M1 14l4-3 2 2.500-3 2z" fill="#e02020"/><path d="M4 8l3-1 2 3-2 2z" fill="#e8b020"/><path d="M8 8l5-6" stroke="#c89050" stroke-width="1.500"/><path d="M10 1l1 2M14 1l-1 3M15 6l-3-1M12 8l-1-2" stroke="#e8c020" stroke-width="1"/><path d="M2 9l3 1M6 13l4 1" stroke="#e02020" stroke-width="1.200"/><circle cx="12.500" cy="3.500" r="1.500" fill="#aaa"/></svg></div>
<div class="a" style="left:1399px;top:494px;width:24px;height:1px;background:#a0a0a0;box-shadow:0 1px 0 #fff"></div>
<div class="a" style="left:1401px;top:499px;width:19px;height:1px;background:#9d9d9d;box-shadow:0 1px 0 #fff"></div>
<div class="a" style="left:1401px;top:503px;width:19px;height:1px;background:#9d9d9d;box-shadow:0 1px 0 #fff"></div>
<div class="a" style="left:1402px;top:512px"><svg width="16" height="16" viewBox="0 0 16 16"><rect x="5.500" y="5.500" width="9.500" height="9.500" fill="#dfe8f4" stroke="#6a88b8"/><rect x="1" y="1" width="10" height="10" fill="#4a78b8" stroke="#2a4a8a"/></svg></div>
<div class="a" style="left:1402px;top:534px"><svg width="16" height="16" viewBox="0 0 16 16"><rect x="1" y="1" width="8" height="8" fill="#dfe8f4" stroke="#6a88b8"/><rect x="4" y="4" width="8" height="8" fill="#4a78b8" stroke="#2a4a8a"/><rect x="9" y="9" width="6" height="6" fill="#dfe8f4" stroke="#6a88b8"/></svg></div>
<div class="a" style="left:1402px;top:556px"><svg width="16" height="16" viewBox="0 0 16 16"><rect x="5.500" y="6" width="9.500" height="9" fill="#dfe8f4" stroke="#6a88b8"/><rect x="1" y="1.500" width="11" height="9.500" fill="#4a78b8" stroke="#2a4a8a"/></svg></div>
<div class="a" style="left:1402px;top:578px"><svg width="16" height="16" viewBox="0 0 16 16"><rect x="1" y="1.500" width="10" height="9" fill="#4a78b8" stroke="#2a4a8a"/><rect x="5" y="5.500" width="10" height="9.500" fill="#c8d8ec" stroke="#6a88b8"/></svg></div>
<div class="a" style="left:1399px;top:603px;width:24px;height:1px;background:#a0a0a0;box-shadow:0 1px 0 #fff"></div>
<svg class="a" style="left:30px;top:108px" width="1366" height="642" viewBox="30 108 1366 642">
<style>.g path,.g circle,.g rect{fill:none;stroke-width:1;shape-rendering:crispEdges}.dj{font-family:"DejaVu Sans","Liberation Sans",sans-serif;font-weight:200}.cjk{font-family:"Noto Sans CJK SC","Liberation Sans",sans-serif;font-weight:100}</style>
<g class="g">
<rect x="387.500" y="114.500" width="780" height="540" stroke="#fff"/>
<path d="M401.9 231.8L540.1 215.5" stroke="#fff" />
<path d="M546.1 214.8L560.0 213.2" stroke="#fff" />
<path d="M571.4 211.9L604.8 207.9" stroke="#fff" />
<path d="M428.9 218.8L597.1 218.8" stroke="#fff" />
<path d="M439.4 222.3L493.3 215.9" stroke="#fff" />
<path d="M504.0 214.7L517.7 213.1" stroke="#fff" />
<path d="M529.6 211.7L584.0 205.3" stroke="#fff" />
<path d="M440.7 233.2L585.2 216.2" stroke="#fff" />
<path d="M584.0 205.3A73.0 73.0 0 0 0 565.2 168.5" stroke="#fff" />
<path d="M557.2 161.3A73.0 73.0 0 0 0 545.4 153.8" stroke="#fff" />
<path d="M533.6 149.0A73.0 73.0 0 0 0 474.7 156.2" stroke="#fff" />
<path d="M464.4 163.7A73.0 73.0 0 0 0 456.4 171.9" stroke="#fff" />
<path d="M448.5 183.4A73.0 73.0 0 0 0 439.4 222.2" stroke="#fff" />
<path d="M564.8 207.5A53.7 53.7 0 0 0 523.9 166.4" stroke="#fff" />
<path d="M512.3 165.1A53.7 53.7 0 0 0 499.6 166.6" stroke="#fff" />
<path d="M488.8 170.5A53.7 53.7 0 0 0 458.6 220.0" stroke="#fff" />
<path d="M440.7 233.2A73.0 73.0 0 0 0 585.3 216.3" stroke="#fff" />
<path d="M460.0 231.0A53.7 53.7 0 0 0 566.0 218.5" stroke="#fff" />
<path d="M512.3 136.0L512.3 190.5" stroke="#fff" />
<path d="M512.3 201.0L512.3 290.0" stroke="#fff" />
<path d="M512.3 303.0L512.3 314.6" stroke="#fff" />
<path d="M512.3 326.6L512.3 381.7" stroke="#fff" />
<path d="M512.3 218.8L519.8 282.4" stroke="#fff" />
<path d="M521.2 294.3L522.6 306.2" stroke="#fff" />
<path d="M524.1 319.1L531.3 380.7" stroke="#fff" />
<path d="M532.7 392.1L534.2 405.5" stroke="#fff" />
<path d="M535.6 416.9L543.0 480.0" stroke="#fff" />
<path d="M414.7 231.1L444.7 490.8" stroke="#fff" />
<path d="M414.7 231.1L417.0 236.9L413.8 237.2Z" style="fill:#ff00ff;stroke:#ff00ff;stroke-width:.5"/>
<path d="M444.9 491.3L443.1 486.5L445.5 486.2Z" style="fill:#fff;stroke:#fff;stroke-width:.5"/>
<path d="M442.6 491.6L544.0 479.9" stroke="#fff" />
<path d="M440.7 233.2L483.2 403Q484.4 407 484.4 411V575.700" stroke="#fff" />
<path d="M484.4 524.2L562.4 524.2" stroke="#fff" />
<path d="M564.0 524.2L604.8 524.2" stroke="#fff" />
<path d="M562.4 513.8L562.4 575.7" stroke="#fff" />
<path d="M585.4 216.3L585.4 263.6" stroke="#fff" />
<path d="M584.3 263.6L584.3 347.5" stroke="#fff" />
<path d="M583.4 347.5L583.4 436.7" stroke="#fff" />
<path d="M582.6 436.7L582.6 474.0" stroke="#fff" />
<path d="M562.8 308Q569.3 309 569.3 316V347.500" stroke="#fff" />
<path d="M568.6 347.5L568.6 443.7" stroke="#fff" />
<path d="M568.6 443.7L563.9 446.0" stroke="#fff" />
<path d="M572.3 314.4L580.8 314.4" stroke="#fff" />
<circle cx="543.1" cy="480.0" r="39.0" stroke="#fff"/>
<circle cx="543.1" cy="480.0" r="24.4" stroke="#fff"/>
<path d="M446.4 480.0L604.8 480.0" stroke="#fff" />
<path d="M543.1 348.8L543.1 427.5" stroke="#fff" />
<path d="M543.1 438.4L543.1 550.8" stroke="#fff" />
<path d="M571.5 451.7L525.6 497.6" stroke="#fff" />
<path d="M516.0 507.2L508.0 515.2" stroke="#fff" />
<path d="M497.8 525.4L453.2 570.0" stroke="#fff" />
<path d="M535.3 441.5L493.5 483.3" stroke="#fff" />
<path d="M483.2 493.6L475.5 501.3" stroke="#fff" />
<path d="M466.6 510.2L425.5 551.3" stroke="#fff" />
<path d="M469.0 411.6L484.4 411.6" stroke="#fff" />
<path d="M471.5 412.3L471.5 479.6" stroke="#ff00ff" />
<rect x="469.9" y="413.9" width="3.2" height="3.2" style="fill:#ff00ff;stroke:none"/>
<rect x="469.9" y="474.9" width="3.2" height="3.2" style="fill:#ff00ff;stroke:none"/>
<path d="M450.7 525.9L474.1 546.8" stroke="#ff00ff" />
<path d="M450.7 525.9L455.3 528.3L453.5 530.2Z" style="fill:#ff00ff;stroke:#ff00ff;stroke-width:.5"/>
<path d="M474.1 546.8L469.5 544.4L471.3 542.5Z" style="fill:#ff00ff;stroke:#ff00ff;stroke-width:.5"/>
<path d="M441 514L446.500 523L452 511" stroke="#fff" />
<path d="M526.3 464.5L561.0 495.7" stroke="#ff00ff" />
<path d="M526.3 464.5L531.8 467.4L529.8 469.6Z" style="fill:#ff00ff;stroke:#ff00ff;stroke-width:.5"/>
<path d="M561.0 495.7L555.5 492.8L557.5 490.6Z" style="fill:#ff00ff;stroke:#ff00ff;stroke-width:.5"/>
<path d="M561.0 495.7L566.5 500.5" stroke="#fff" />
<rect x="566" y="499" width="7.500" height="8" rx="2.500" stroke="#fff"/>
<path d="M538 497L543 505L551 490" stroke="#fff" />
<path d="M496.9 526.2A65.3 65.3 0 0 0 541.4 545.3" stroke="#ff00ff" />
<path d="M497.5 526.6L495.1 531.2L493.2 529.4Z" style="fill:#ff00ff;stroke:#ff00ff;stroke-width:.5"/>
<rect x="539.9" y="543.8" width="3.2" height="3.2" style="fill:#ff00ff;stroke:none"/>
<path d="M543.1 548.5L562.4 548.5" stroke="#ff00ff" />
<rect x="544.9" y="546.9" width="3.2" height="3.2" style="fill:#ff00ff;stroke:none"/>
<rect x="557.4" y="546.9" width="3.2" height="3.2" style="fill:#ff00ff;stroke:none"/>
<path d="M484.4 573.6L562.4 573.6" stroke="#ff00ff" />
<rect x="487.7" y="571.8" width="3.6" height="3.6" style="fill:#ff00ff;stroke:none"/>
<rect x="555.7" y="571.8" width="3.6" height="3.6" style="fill:#ff00ff;stroke:none"/>
<path d="M601.7 480.0L601.7 524.2" stroke="#ff00ff" />
<rect x="600.1" y="482.4" width="3.2" height="3.2" style="fill:#ff00ff;stroke:none"/>
<rect x="600.1" y="518.9" width="3.2" height="3.2" style="fill:#ff00ff;stroke:none"/>
<path d="M576.500 529.200L579 525L581.700 529.200Z" stroke="#fff" />
<path d="M576.5 529.2L572.3 537.0" stroke="#fff" />
<path d="M513.0 360.3L543.1 360.3" stroke="#ff00ff" />
<rect x="514.9" y="358.7" width="3.2" height="3.2" style="fill:#ff00ff;stroke:none"/>
<rect x="537.9" y="358.7" width="3.2" height="3.2" style="fill:#ff00ff;stroke:none"/>
<path d="M569.0 357.4L584.3 357.4" stroke="#ff00ff" />
<rect x="571.4" y="355.8" width="3.2" height="3.2" style="fill:#ff00ff;stroke:none"/>
<rect x="578.9" y="355.8" width="3.2" height="3.2" style="fill:#ff00ff;stroke:none"/>
<path d="M570.2 174.4L454.4 263.2" stroke="#ff00ff" />
<path d="M570.2 174.4L566.4 179.2L564.5 176.8Z" style="fill:#ff00ff;stroke:#ff00ff;stroke-width:.5"/>
<path d="M454.4 263.2L458.2 258.4L460.1 260.8Z" style="fill:#ff00ff;stroke:#ff00ff;stroke-width:.5"/>
<path d="M477.3 178.1L547.3 259.5" stroke="#ff00ff" />
<path d="M477.3 178.1L482.3 181.7L480.1 183.6Z" style="fill:#ff00ff;stroke:#ff00ff;stroke-width:.5"/>
<path d="M547.3 259.5L542.3 255.9L544.5 254.0Z" style="fill:#ff00ff;stroke:#ff00ff;stroke-width:.5"/>
<path d="M507 213.500L512.300 213.500M509 205L512 213L516 203" stroke="#fff" />
<path d="M471 216L477 216L477 222L471 222ZM477 222L481.500 229L486 215" stroke="#fff" />
<path d="M523 262L528 268L534 250L534 245" stroke="#fff" />
<path d="M690.2 136.0L690.2 584.4" stroke="#fff" />
<path d="M713.3 164.0L713.3 291.4" stroke="#fff" />
<path d="M713.3 291.4L709.4 294.8" stroke="#fff" />
<path d="M690.2 245Q694.5 245.500 694.5 250.500V524.400" stroke="#fff" />
<path d="M713.3 245Q709.4 245.500 709.4 250.500V438Q709.4 441.100 713 441.100H883.500" stroke="#fff" />
<path d="M709.4 441.100V475Q709.4 480.200 714.500 480.200" stroke="#fff" />
<path d="M690.2 292.2L694.5 295.7" stroke="#fff" />
<path d="M690.2 216.2L713.3 216.2" stroke="#fff" />
<path d="M690.2 219.1L713.3 219.1" stroke="#fff" />
<path d="M690.2 230.8L713.3 230.8" stroke="#fff" />
<path d="M690.2 233.3L713.3 233.3" stroke="#fff" />
<path d="M690.2 145.5L737.3 145.5" stroke="#ff00ff" />
<rect x="692.7" y="143.7" width="3.6" height="3.6" style="fill:#ff00ff;stroke:none"/>
<path d="M727.7 145.5L727.7 170.3" stroke="#ff00ff" />
<path d="M727.7 170.3L713.3 170.3" stroke="#ff00ff" />
<rect x="716.2" y="168.5" width="3.6" height="3.6" style="fill:#ff00ff;stroke:none"/>
<rect x="737.300" y="139.100" width="49.500" height="13.200" stroke="#ff00ff"/>
<path d="M757.5 139.1L757.5 152.3" stroke="#ff00ff" />
<path d="M774.5 139.1L774.5 152.3" stroke="#ff00ff" />
<path d="M740.2 150.3L754.8 150.3" stroke="#fff" />
<path d="M747.6 140.8L747.6 150.3" stroke="#fff" />
<path d="M690.2 187.4L743.6 187.4" stroke="#ff00ff" />
<rect x="692.7" y="185.6" width="3.6" height="3.6" style="fill:#ff00ff;stroke:none"/>
<rect x="706.7" y="185.6" width="3.6" height="3.6" style="fill:#ff00ff;stroke:none"/>
<path d="M675.100 235L690 244.500L683.500 248.500L684.500 240.500" stroke="#fff" />
<path d="M730 261.600L713.500 252.200L720 248L719.500 256" stroke="#fff" />
<path d="M670.8 326.5L705.9 326.5" stroke="#ff00ff" />
<rect x="683.9" y="324.9" width="3.2" height="3.2" style="fill:#ff00ff;stroke:none"/>
<rect x="696.9" y="324.9" width="3.2" height="3.2" style="fill:#ff00ff;stroke:none"/>
<path d="M694.5 354.4L709.4 354.4" stroke="#ff00ff" />
<rect x="696.9" y="352.8" width="3.2" height="3.2" style="fill:#ff00ff;stroke:none"/>
<rect x="703.9" y="352.8" width="3.2" height="3.2" style="fill:#ff00ff;stroke:none"/>
<path d="M709.4 314.5L836.0 441.0" stroke="#fff" />
<path d="M781.3 350.0L781.3 473.4" stroke="#fff" />
<path d="M850.6 350.0L850.6 584.4" stroke="#fff" />
<path d="M781.3 352.2L850.6 352.2" stroke="#ff00ff" />
<rect x="784.2" y="350.4" width="3.6" height="3.6" style="fill:#ff00ff;stroke:none"/>
<rect x="844.2" y="350.4" width="3.6" height="3.6" style="fill:#ff00ff;stroke:none"/>
<path d="M836.4 372.7L836.4 441.0" stroke="#fff" />
<path d="M824.0 375.3L861.8 375.3" stroke="#ff00ff" />
<rect x="830.2" y="373.7" width="3.2" height="3.2" style="fill:#ff00ff;stroke:none"/>
<rect x="852.8" y="373.7" width="3.2" height="3.2" style="fill:#ff00ff;stroke:none"/>
<path d="M805.3 409.9A44.0 44.0 0 0 0 792.4 441.0" stroke="#ff00ff" />
<rect x="790.9" y="434.9" width="3.2" height="3.2" style="fill:#ff00ff;stroke:none"/>
<path d="M805.3 409.9L802.7 414.4L800.8 412.5Z" style="fill:#ff00ff;stroke:#ff00ff;stroke-width:.5"/>
<rect x="781.300" y="442.500" width="69.300" height="30.900" stroke="#fff"/>
<path d="M781.3 442.5L850.6 473.4" stroke="#fff" />
<path d="M781.3 473.4L850.6 442.5" stroke="#fff" />
<rect x="833.500" y="469" width="6" height="6.400" stroke="#fff"/>
<path d="M694.5 455.4L736.0 455.4" stroke="#fff" />
<path d="M742.8 455.4L770.0 455.4" stroke="#fff" />
<path d="M776.0 455.4L808.7 455.4" stroke="#fff" />
<path d="M823.0 455.4L830.0 455.4" stroke="#fff" />
<path d="M833.5 455.4L850.6 455.4" stroke="#fff" />
<path d="M694.5 504.2L738.5 504.2" stroke="#fff" />
<path d="M744.5 504.2L771.0 504.2" stroke="#fff" />
<path d="M777.0 504.2L798.5 504.2" stroke="#fff" />
<path d="M804.5 504.2L828.4 504.2" stroke="#fff" />
<path d="M833.5 504.2L850.6 504.2" stroke="#fff" />
<path d="M680.2 480.2L752.2 480.2" stroke="#fff" />
<path d="M760.0 480.2L777.0 480.2" stroke="#fff" />
<path d="M788.0 480.2L860.0 480.2" stroke="#fff" />
<path d="M756.500 520.500V486Q756.500 481 760.500 480.500" stroke="#fff" />
<path d="M653.4 509.7L742.4 509.7" stroke="#fff" />
<path d="M653.4 524.4L756.5 524.4" stroke="#fff" />
<path d="M756.5 524.4L759.0 519.6" stroke="#fff" />
<path d="M759.0 519.6L885.5 519.6" stroke="#fff" />
<path d="M711.6 509.7L711.6 542.8" stroke="#fff" />
<path d="M742.4 509.7L742.4 542.8" stroke="#fff" />
<path d="M756.5 524.4L756.5 564.6" stroke="#fff" />
<path d="M656.3 509.7L656.3 524.4" stroke="#ff00ff" />
<rect x="654.7" y="510.9" width="3.2" height="3.2" style="fill:#ff00ff;stroke:none"/>
<rect x="654.7" y="519.9" width="3.2" height="3.2" style="fill:#ff00ff;stroke:none"/>
<path d="M671 516L673.400 512L676 516ZM671 516L666 523.500" stroke="#fff" />
<path d="M714 517L719 513.500L719 520.500ZM739.500 517L734.500 513.500L734.500 520.500Z" stroke="#fff" />
<path d="M690.2 540.2L742.4 540.2" stroke="#ff00ff" />
<rect x="693.4" y="538.6" width="3.2" height="3.2" style="fill:#ff00ff;stroke:none"/>
<rect x="705.4" y="538.6" width="3.2" height="3.2" style="fill:#ff00ff;stroke:none"/>
<rect x="714.4" y="538.6" width="3.2" height="3.2" style="fill:#ff00ff;stroke:none"/>
<rect x="736.4" y="538.6" width="3.2" height="3.2" style="fill:#ff00ff;stroke:none"/>
<path d="M742.8 534.2L776.2 534.2" stroke="#ff00ff" />
<rect x="745.2" y="532.4" width="3.6" height="3.6" style="fill:#ff00ff;stroke:none"/>
<rect x="776.200" y="526.200" width="57.700" height="14" stroke="#ff00ff"/>
<path d="M797.3 526.2L797.3 540.2" stroke="#ff00ff" />
<path d="M822.4 526.2L822.4 540.2" stroke="#ff00ff" />
<path d="M779.0 538.3L794.2 538.3" stroke="#fff" />
<path d="M786.5 528.2L786.5 538.3" stroke="#fff" />
<path d="M690.2 561.6L756.5 561.6" stroke="#ff00ff" />
<rect x="693.2" y="559.8" width="3.6" height="3.6" style="fill:#ff00ff;stroke:none"/>
<rect x="750.2" y="559.8" width="3.6" height="3.6" style="fill:#ff00ff;stroke:none"/>
<path d="M690.2 582.5L850.6 582.5" stroke="#ff00ff" />
<rect x="693.2" y="580.7" width="3.6" height="3.6" style="fill:#ff00ff;stroke:none"/>
<rect x="844.2" y="580.7" width="3.6" height="3.6" style="fill:#ff00ff;stroke:none"/>
<path d="M882.5 442.0L882.5 517.7" stroke="#ff00ff" />
<rect x="880.9" y="443.9" width="3.2" height="3.2" style="fill:#ff00ff;stroke:none"/>
<rect x="880.9" y="512.9" width="3.2" height="3.2" style="fill:#ff00ff;stroke:none"/>
<path d="M855.5 654.5V576.5H1167.5" stroke="#fff"/>
<path d="M991.5 592.5L1167.5 592.5" stroke="#fff" />
<path d="M855.5 608.5L1167.5 608.5" stroke="#fff" />
<path d="M855.5 623.5L991.5 623.5" stroke="#fff" />
<path d="M855.5 639.5L991.5 639.5" stroke="#fff" />
<path d="M991.5 576.5L991.5 654.5" stroke="#fff" />
<path d="M1020.5 576.5L1020.5 608.5" stroke="#fff" />
<path d="M1069.5 576.5L1069.5 608.5" stroke="#fff" />
<path d="M1108.5 576.5L1108.5 608.5" stroke="#fff" />
<path d="M1079.5 608.5L1079.5 654.5" stroke="#fff" />
<path d="M884.5 608.5L884.5 654.5" stroke="#fff" />
<path d="M952.5 608.5L952.5 654.5" stroke="#fff" />
<path d="M908.500 160.600L915.800 173.100L928.900 150" stroke="#fff" />
<circle cx="915.3" cy="163.3" r="5.0" stroke="#fff"/>
<rect x="43.500" y="723.500" width="12" height="12" stroke="#fff"/>
<path d="M49.5 723.5L49.5 668.4" stroke="#fff" />
<path d="M44 668.400H55.500L49.500 652.800Z" stroke="#fff" />
<path d="M49.5 668.0L49.5 655.0" stroke="#fff" />
<path d="M55.5 729.5L111.3 729.5" stroke="#fff" />
<path d="M111.300 724.500V735.400L126.600 729.500Z" stroke="#fff" />
<path d="M111.3 729.5L124.0 729.5" stroke="#fff" />
<path d="M45.100 624.800L51.500 633.500L58 624.800M51.500 633.500V642" stroke="#fff" />
<path d="M139 721.800L151.800 738M151.800 721.800L139 738" stroke="#fff" />
</g>
<text x="0" y="0" transform="translate(428.0 367.5) rotate(-83.3) scale(1 1)" class="dj" font-size="10.5" fill="#fff" text-anchor="middle" style="font-weight:400">134.5</text>
<text x="0" y="0" transform="translate(426.5 344.0) rotate(-83.3) scale(1 1)" class="dj" font-size="4.5" fill="#fff" text-anchor="middle" style="font-weight:400">+0.2</text>
<text x="0" y="0" transform="translate(431.0 344.5) rotate(-83.3) scale(1 1)" class="dj" font-size="4.5" fill="#fff" text-anchor="middle" style="font-weight:400">-0.2</text>
<text x="0" y="0" transform="translate(471.0 446.0) rotate(-90) scale(1 1)" class="dj" font-size="10.5" fill="#fff" text-anchor="middle" style="font-weight:400">35</text>
<text x="0" y="0" transform="translate(466.0 534.0) rotate(42) scale(1 1)" class="dj" font-size="10.5" fill="#fff" text-anchor="middle" style="font-weight:400">17</text>
<text x="0" y="0" transform="translate(441.0 519.0) rotate(-45) scale(1 1)" class="dj" font-size="7" fill="#fff" text-anchor="middle" style="font-weight:400">6.3</text>
<text x="569.8" y="506.0" class="dj" font-size="6.5" fill="#fff" text-anchor="middle" style="font-weight:400">A</text>
<text x="0" y="0" transform="translate(536.5 463.5) rotate(42) scale(1 1)" class="dj" font-size="10" fill="#fff" text-anchor="middle" style="font-weight:400">ø25</text>
<text x="0" y="0" transform="translate(550.0 471.0) rotate(42) scale(1 1)" class="dj" font-size="4.5" fill="#fff" text-anchor="middle" style="font-weight:400">+0.1</text>
<text x="541.0" y="497.0" class="dj" font-size="8" fill="#fff" text-anchor="middle" style="font-weight:400">1.6</text>
<text x="0" y="0" transform="translate(520.0 540.0) rotate(22) scale(1 1)" class="dj" font-size="10.5" fill="#fff" text-anchor="middle" style="font-weight:400">45°</text>
<text x="553.4" y="547.2" class="dj" font-size="10.5" fill="#fff" text-anchor="middle" style="font-weight:400">10</text>
<text x="524.3" y="571.6" class="dj" font-size="10.5" fill="#fff" text-anchor="middle" style="font-weight:400">40</text>
<text x="0" y="0" transform="translate(600.2 511.5) rotate(-90) scale(1 1)" class="dj" font-size="10.5" fill="#fff" text-anchor="middle" style="font-weight:400">23</text>
<text x="0" y="0" transform="translate(596.5 497.0) rotate(-90) scale(1 1)" class="dj" font-size="4.5" fill="#fff" text-anchor="middle" style="font-weight:400">+0.1</text>
<text x="0" y="0" transform="translate(600.5 497.0) rotate(-90) scale(1 1)" class="dj" font-size="4.5" fill="#fff" text-anchor="middle" style="font-weight:400">-0.1</text>
<text x="581.0" y="536.5" class="dj" font-size="7" fill="#fff" text-anchor="middle" style="font-weight:400">3.2</text>
<text x="527.7" y="358.8" class="dj" font-size="10.5" fill="#fff" text-anchor="middle" style="font-weight:400">15.8</text>
<text x="576.0" y="356.0" class="dj" font-size="10.5" fill="#fff" text-anchor="middle" style="font-weight:400">8</text>
<text x="0" y="0" transform="translate(499.5 199.0) rotate(49.3) scale(1 1)" class="dj" font-size="10" fill="#fff" text-anchor="middle" style="font-weight:400">ø55</text>
<text x="0" y="0" transform="translate(511.0 206.0) rotate(49.3) scale(1 1)" class="dj" font-size="4.5" fill="#fff" text-anchor="middle" style="font-weight:400">+0.4</text>
<text x="0" y="0" transform="translate(473.5 246.5) rotate(-37.5) scale(1 1)" class="dj" font-size="10" fill="#fff" text-anchor="middle" style="font-weight:400">ø75</text>
<text x="0" y="0" transform="translate(487.0 231.0) rotate(-37.5) scale(1 1)" class="dj" font-size="4.5" fill="#fff" text-anchor="middle" style="font-weight:400">+0.4</text>
<text x="474.0" y="221.5" class="dj" font-size="4.5" fill="#fff" text-anchor="middle" style="font-weight:400">6.3</text>
<text x="0" y="0" transform="translate(526.0 262.0) rotate(-60) scale(1 1)" class="dj" font-size="7" fill="#fff" text-anchor="middle" style="font-weight:400">3.2</text>
<text x="766.0" y="150.0" class="dj" font-size="8.5" fill="#fff" text-anchor="middle" style="font-weight:400">0.1</text>
<text x="780.7" y="150.0" class="dj" font-size="8.5" fill="#fff" text-anchor="middle" style="font-weight:400">A</text>
<text x="725.0" y="186.4" class="dj" font-size="10.5" fill="#fff" text-anchor="middle" style="font-weight:400">12</text>
<text x="737.5" y="181.5" class="dj" font-size="4.5" fill="#fff" text-anchor="middle" style="font-weight:400">-0.1</text>
<text x="737.5" y="186.0" class="dj" font-size="4.5" fill="#fff" text-anchor="middle" style="font-weight:400">-0.2</text>
<text x="0" y="0" transform="translate(680.0 246.0) rotate(-60) scale(1 1)" class="dj" font-size="7" fill="#fff" text-anchor="middle" style="font-weight:400">3.2</text>
<text x="0" y="0" transform="translate(724.0 252.0) rotate(60) scale(1 1)" class="dj" font-size="7" fill="#fff" text-anchor="middle" style="font-weight:400">3.2</text>
<text x="674.8" y="325.3" class="dj" font-size="10.5" fill="#fff" text-anchor="middle" style="font-weight:400">2</text>
<text x="702.0" y="353.0" class="dj" font-size="10.5" fill="#fff" text-anchor="middle" style="font-weight:400">8</text>
<text x="815.9" y="350.8" class="dj" font-size="10.5" fill="#fff" text-anchor="middle" style="font-weight:400">35</text>
<text x="843.0" y="374.2" class="dj" font-size="10.5" fill="#fff" text-anchor="middle" style="font-weight:400">7</text>
<text x="0" y="0" transform="translate(797.0 425.0) rotate(-68) scale(1 1)" class="dj" font-size="10" fill="#fff" text-anchor="middle" style="font-weight:400">45°</text>
<text x="0" y="0" transform="translate(653.5 517.0) rotate(-90) scale(1 1)" class="dj" font-size="10" fill="#fff" text-anchor="middle" style="font-weight:400">8</text>
<text x="674.5" y="522.0" class="dj" font-size="7" fill="#fff" text-anchor="middle" style="font-weight:400">6.3</text>
<text x="0" y="0" transform="translate(724.5 515.0) rotate(-90) scale(1 1)" class="dj" font-size="7" fill="#fff" text-anchor="middle" style="font-weight:400">3.2</text>
<text x="0" y="0" transform="translate(731.0 519.0) rotate(90) scale(1 1)" class="dj" font-size="7" fill="#fff" text-anchor="middle" style="font-weight:400">3.2</text>
<text x="700.8" y="539.4" class="dj" font-size="10.5" fill="#fff" text-anchor="middle" style="font-weight:400">11</text>
<text x="721.5" y="539.4" class="dj" font-size="10.5" fill="#fff" text-anchor="middle" style="font-weight:400">16</text>
<text x="735.0" y="534.5" class="dj" font-size="4.5" fill="#fff" text-anchor="middle" style="font-weight:400">+0.1</text>
<text x="735.0" y="539.0" class="dj" font-size="4.5" fill="#fff" text-anchor="middle" style="font-weight:400">+0.2</text>
<text x="809.6" y="537.5" class="dj" font-size="8.5" fill="#fff" text-anchor="middle" style="font-weight:400">0.08</text>
<text x="828.0" y="537.5" class="dj" font-size="8.5" fill="#fff" text-anchor="middle" style="font-weight:400">A</text>
<text x="723.4" y="560.4" class="dj" font-size="10.5" fill="#fff" text-anchor="middle" style="font-weight:400">32</text>
<text x="770.5" y="581.0" class="dj" font-size="10.5" fill="#fff" text-anchor="middle" style="font-weight:400">80</text>
<text x="0" y="0" transform="translate(881.0 481.0) rotate(-90) scale(1 1)" class="dj" font-size="10" fill="#fff" text-anchor="middle" style="font-weight:400">ø40</text>
<text x="0" y="0" transform="translate(892.0 590.0) rotate(0) scale(0.8 1)" class="cjk" font-size="9.5" fill="#fff" text-anchor="middle" style="font-weight:400">拨</text>
<text x="0" y="0" transform="translate(948.7 590.0) rotate(0) scale(0.8 1)" class="cjk" font-size="9.5" fill="#fff" text-anchor="middle" style="font-weight:400">叉</text>
<text x="903.0" y="605.0" class="dj" font-size="12.5" fill="#fff" text-anchor="middle" style="font-weight:200;stroke:#fff;stroke-width:.35">(CA6104</text>
<text x="0" y="0" transform="translate(950.0 604.5) rotate(0) scale(0.8 1)" class="cjk" font-size="8.5" fill="#fff" text-anchor="middle" style="font-weight:400">车床)</text>
<text x="0" y="0" transform="translate(1005.0 588.5) rotate(0) scale(0.75 1)" class="cjk" font-size="9" fill="#fff" text-anchor="middle" style="font-weight:400">图号</text>
<text x="0" y="0" transform="translate(1005.0 604.5) rotate(0) scale(0.75 1)" class="cjk" font-size="9" fill="#fff" text-anchor="middle" style="font-weight:400">重量</text>
<text x="1045.0" y="590.0" class="dj" font-size="12.5" fill="#fff" text-anchor="middle" style="font-weight:200;stroke:#fff;stroke-width:.35">1</text>
<text x="1133.0" y="590.0" class="dj" font-size="12.5" fill="#fff" text-anchor="middle" style="font-weight:200;stroke:#fff;stroke-width:.35">1:1</text>
<text x="1133.0" y="606.0" class="dj" font-size="12.5" fill="#fff" text-anchor="middle" style="font-weight:200;stroke:#fff;stroke-width:.35">1</text>
<text x="0" y="0" transform="translate(1080.0 588.5) rotate(0) scale(0.75 1)" class="cjk" font-size="9" fill="#fff" text-anchor="middle" style="font-weight:400">比</text>
<text x="0" y="0" transform="translate(1096.0 588.5) rotate(0) scale(0.75 1)" class="cjk" font-size="9" fill="#fff" text-anchor="middle" style="font-weight:400">例</text>
<text x="0" y="0" transform="translate(1080.0 604.5) rotate(0) scale(0.75 1)" class="cjk" font-size="9" fill="#fff" text-anchor="middle" style="font-weight:400">数</text>
<text x="0" y="0" transform="translate(1096.0 604.5) rotate(0) scale(0.75 1)" class="cjk" font-size="9" fill="#fff" text-anchor="middle" style="font-weight:400">量</text>
<text x="0" y="0" transform="translate(862.0 620.5) rotate(0) scale(0.75 1)" class="cjk" font-size="9" fill="#fff" text-anchor="middle" style="font-weight:400">制</text>
<text x="0" y="0" transform="translate(877.5 620.5) rotate(0) scale(0.75 1)" class="cjk" font-size="9" fill="#fff" text-anchor="middle" style="font-weight:400">图</text>
<text x="0" y="0" transform="translate(862.0 636.0) rotate(0) scale(0.75 1)" class="cjk" font-size="9" fill="#fff" text-anchor="middle" style="font-weight:400">指</text>
<text x="0" y="0" transform="translate(877.5 636.0) rotate(0) scale(0.75 1)" class="cjk" font-size="9" fill="#fff" text-anchor="middle" style="font-weight:400">导</text>
<text x="0" y="0" transform="translate(862.0 652.0) rotate(0) scale(0.75 1)" class="cjk" font-size="9" fill="#fff" text-anchor="middle" style="font-weight:400">审</text>
<text x="0" y="0" transform="translate(877.5 652.0) rotate(0) scale(0.75 1)" class="cjk" font-size="9" fill="#fff" text-anchor="middle" style="font-weight:400">核</text>
<text x="0" y="0" transform="translate(908.0 620.5) rotate(0) scale(0.75 1)" class="cjk" font-size="9" fill="#fff" text-anchor="middle" style="font-weight:400">邹</text>
<text x="0" y="0" transform="translate(931.0 620.5) rotate(0) scale(0.75 1)" class="cjk" font-size="9" fill="#fff" text-anchor="middle" style="font-weight:400">舰</text>
<text x="0" y="0" transform="translate(1034.0 636.5) rotate(0) scale(0.78 1)" class="cjk" font-size="11" fill="#fff" text-anchor="middle" style="font-weight:400">机械制造课程设计</text>
<text x="0" y="0" transform="translate(1099.0 626.5) rotate(0) scale(0.75 1)" class="cjk" font-size="10" fill="#fff" text-anchor="middle" style="font-weight:400">机械</text>
<text x="1127.0" y="627.5" class="dj" font-size="15" fill="#fff" text-anchor="middle" style="font-weight:200;stroke:#fff;stroke-width:.35">03-1</text>
<text x="0" y="0" transform="translate(1150.0 626.5) rotate(0) scale(0.75 1)" class="cjk" font-size="10" fill="#fff" text-anchor="middle" style="font-weight:400">班</text>
<text x="1108.0" y="646.5" class="dj" font-size="15" fill="#fff" text-anchor="middle" style="font-weight:200;stroke:#fff;stroke-width:.35">17</text>
<text x="0" y="0" transform="translate(1123.0 645.5) rotate(0) scale(0.75 1)" class="cjk" font-size="10" fill="#fff" text-anchor="middle" style="font-weight:400">号</text>
<text x="0" y="0" transform="translate(883.0 170.0) rotate(0) scale(0.64 1)" class="cjk" font-size="25" fill="#fff" text-anchor="middle" style="font-weight:100">其余</text>
<text x="0" y="0" transform="translate(1017.3 356.5) rotate(0) scale(0.668 1)" class="cjk" font-size="31" fill="#fff" text-anchor="middle" style="font-weight:100">技术要求</text>
<text x="934.4" y="398.5" class="dj" font-size="22" fill="#fff" text-anchor="start" style="font-weight:200">1.</text>
<text x="0" y="0" transform="translate(952.0 397.5) rotate(0) scale(0.663 1)" class="cjk" font-size="25" fill="#fff" text-anchor="start" style="font-weight:100">铸造圆角</text>
<text x="1018.3" y="398.5" class="dj" font-size="22" fill="#fff" text-anchor="start" style="font-weight:200">R3~5</text>
<text x="934.4" y="436.5" class="dj" font-size="22" fill="#fff" text-anchor="start" style="font-weight:200">2.</text>
<text x="0" y="0" transform="translate(957.7 435.5) rotate(0) scale(0.658 1)" class="cjk" font-size="25" fill="#fff" text-anchor="start" style="font-weight:100">锐边倒角</text>
<text x="1023.5" y="436.5" class="dj" font-size="22" fill="#fff" text-anchor="start" style="font-weight:200">0.5×45</text>
</svg>
<div class="a" style="left:852px;top:489px;width:67px;height:22px;box-sizing:border-box;background:#fff;border:1px solid #c4c4ee"></div>
<div class="a" style="left:856px;top:491px;width:52px;height:17px;background:#3399ff;color:#fff;font-size:13px;line-height:17px;white-space:nowrap;text-align:center;letter-spacing:-.1px">827.9965</div>
<div class="a" style="left:922px;top:489px;width:67px;height:22px;box-sizing:border-box;background:#14145c;border:1px solid #b4b4e4;color:#e4e4ff;font-size:13px;line-height:20px;white-space:nowrap;padding-left:4px;letter-spacing:-.1px">370.3332</div>
<div class="a" style="left:30px;top:751px;width:1366px;height:16px;background:#f0f0f0"></div>
<svg class="a" style="left:30px;top:751px" width="200" height="17" viewBox="0 0 200 17"><rect x="0.5" y=".5" width="18" height="14" fill="#f4f4f4" stroke="#9a9a9a"/><rect x="18.5" y=".5" width="18" height="14" fill="#f4f4f4" stroke="#9a9a9a"/><rect x="36.5" y=".5" width="18" height="14" fill="#f4f4f4" stroke="#9a9a9a"/><rect x="54.5" y=".5" width="18" height="14" fill="#f4f4f4" stroke="#9a9a9a"/><path d="M6 3.500v9" stroke="#000" stroke-width="1.500"/><path d="M13 3.500v9l-5.500-4.500z" fill="#000"/><path d="M31 3.500v9l-5.500-4.500z" fill="#000"/><path d="M42 3.500v9l5.500-4.500z" fill="#000"/><path d="M60 3.500v9l5.500-4.500zM67 3.500v9" fill="#000" stroke="#000" stroke-width="1.200"/><path d="M76 0h40l-4 14h-30z" fill="#000"/><path d="M116.500 1l3 13h32l4-14" fill="#fff" stroke="#000" stroke-width="1"/><path d="M157 1l3 13h34l4-14" fill="#fff" stroke="#000" stroke-width="1"/><text x="85" y="12" font-size="12" fill="#fff" font-family="Liberation Sans,Noto Sans CJK SC,sans-serif">模型</text><text x="120.500" y="12" font-size="12" fill="#000" font-family="Liberation Sans,Noto Sans CJK SC,sans-serif">布局1</text><text x="162" y="12" font-size="12" fill="#000" font-family="Liberation Sans,Noto Sans CJK SC,sans-serif">布局2</text></svg>
<div class="a" style="left:3px;top:770px;width:1420px;height:1px;background:#fff"></div>
<div class="a" style="left:3px;top:771px;width:1420px;height:1px;background:#868686"></div><div class="a" style="left:3px;top:772px;width:1420px;height:1px;background:#c4c4c4"></div>
<div class="a" style="left:3px;top:773px;width:1420px;height:1px;background:#fdfdfd"></div>
<div class="a" style="left:9px;top:781px;width:1px;height:42px;background:#9d9d9d;box-shadow:1px 0 0 #fff"></div><div class="a" style="left:13px;top:781px;width:1px;height:42px;background:#9d9d9d;box-shadow:1px 0 0 #fff"></div>
<div class="a" style="left:20px;top:782px;width:1396px;height:44px;background:#fff;border-top:2px solid #7c7c7c;border-left:2px solid #7c7c7c;box-sizing:border-box"></div>
<div class="a" style="left:22px;top:806px;width:1394px;height:1px;background:#8c8c8c"></div>
<div class="a" style="left:22px;top:784px;font-family:'Liberation Mono','Noto Serif CJK SC',monospace;font-size:13px;white-space:nowrap;color:#000;line-height:20px"><span style="font-size:15px">命令</span>: COMMANDLINE</div>
<div class="a" style="left:22px;top:809px;font-family:'Liberation Mono','Noto Serif CJK SC',monospace;font-size:13px;white-space:nowrap;color:#000;line-height:20px"><span style="font-size:15px">命令</span>:</div>
<div class="a" style="left:1399px;top:784px;width:16px;height:22px;background:#f0f0f0"></div>
<div class="a" style="left:1403px;top:789px;border-left:4px solid transparent;border-right:4px solid transparent;border-bottom:4px solid #444"></div>
<div class="a" style="left:1403px;top:799px;border-left:4px solid transparent;border-right:4px solid transparent;border-top:4px solid #444"></div>
<div class="a" style="left:1332px;top:808px;width:64px;height:17px;background:#efefef"></div>
<div class="a" style="left:1338px;top:812px;border-top:4px solid transparent;border-bottom:4px solid transparent;border-right:4px solid #444"></div>
<div class="a" style="left:1386px;top:812px;border-top:4px solid transparent;border-bottom:4px solid transparent;border-left:4px solid #444"></div>
<div class="a" style="left:1349px;top:808px;width:14px;height:16px;border:1px solid #9a9a9a;border-radius:2px;box-sizing:border-box;background:linear-gradient(180deg,#f4f4f4 0,#ececec 48%,#d8d8d8 52%,#cfcfcf 100%)"></div>
<div class="a" style="left:1396px;top:807px;width:20px;height:19px;background:#f0f0f0"></div>
<div class="a" style="left:3px;top:828px;width:1420px;height:1px;background:#a8a8a8"></div><div class="a" style="left:3px;top:829px;width:1420px;height:1px;background:#fff"></div>
<div class="a" style="left:3px;top:830px;width:1420px;height:21px;background:#f1eeee"></div>
<div class="a" style="left:5px;top:832px;width:213px;height:18px;box-sizing:border-box;border:1px solid;border-color:#8a8a8a #fff #fff #8a8a8a"></div>
<div class="a" style="left:9px;top:836px;font-family:'Liberation Mono',monospace;font-size:12px;line-height:15px;white-space:nowrap;transform:scaleX(.8333);transform-origin:0 0">827.9965, 370.3332, 0.0000</div>
<div class="a sb up" style="left:223px;width:27px">捕捉</div>
<div class="a sb up" style="left:254px;width:28px">栅格</div>
<div class="a sb up" style="left:287px;width:27px">正交</div>
<div class="a sb dn" style="left:318px;width:28px">极轴</div>
<div class="a sb dn" style="left:350px;width:52px">对象捕捉</div>
<div class="a sb dn" style="left:406px;width:52px">对象追踪</div>
<div class="a sb dn" style="left:462px;width:28px"><span style="display:inline-block;font-family:'Liberation Mono',monospace;font-size:12px;transform:scaleX(.8333);transform-origin:50% 50%;font-weight:bold">DUCS</span></div>
<div class="a sb dn" style="left:494px;width:22px"><span style="display:inline-block;font-family:'Liberation Mono',monospace;font-size:12px;transform:scaleX(.8333);transform-origin:50% 50%;font-weight:bold">DYN</span></div>
<div class="a sb up" style="left:520px;width:28px">线宽</div>
<div class="a sb dn" style="left:552px;width:28px">模型</div>
<div class="a" style="left:1304px;top:832px;width:64px;height:18px;box-sizing:border-box;border:1px solid;border-color:#8a8a8a #fff #fff #8a8a8a"></div>
<svg class="a" style="left:1306px;top:832px" width="104" height="18" viewBox="0 0 104 18">
<path d="M4 4c-1 5 3 9 8 8z" fill="#b8c8e8" stroke="#4a6ab0" stroke-width="1"/><path d="M6 3l6 8M9 8l4-5" stroke="#4a6ab0" stroke-width="1"/><path d="M3 15.500h9l-2-2h-5z" fill="#8aa4d8" stroke="#4a6ab0" stroke-width=".6"/>
<path d="M31 8v-3c0-3 5-3 5 0v2" fill="none" stroke="#d8b020" stroke-width="1.600"/><rect x="22" y="8" width="11" height="8.500" rx="1" fill="#e8c820" stroke="#6a5808" stroke-width="1"/><path d="M22 10.500h11M22 13.500h11" stroke="#6a5808" stroke-width=".8"/><path d="M26 8.500v8" stroke="#fff8a0" stroke-width="1.500"/>
<path d="M42 3h8l4 4v8h-12z" fill="#4a6a9a" stroke="#2a4a7a" stroke-width=".8"/><path d="M50 3v4h4" fill="#c8d8ec"/><path d="M47 4v11M43.500 7h7" stroke="#fff" stroke-width="1.200"/><circle cx="47" cy="7" r="1.500" fill="none" stroke="#fff"/>
<circle cx="54" cy="13" r="4" fill="#28b028"/><path d="M51.800 13l1.800 1.800 3-3.400" fill="none" stroke="#fff" stroke-width="1.500"/>
<path d="M67 11h7l-3.500 4z" fill="#000"/>
<rect x="84.500" y="1" width="15" height="15" fill="#fff" stroke="#2a4a8a" stroke-width="1.400"/><rect x="86.500" y="3" width="11" height="11" fill="#b8cce8" stroke="#2a4a8a" stroke-width=".8"/>
</svg>
<div class="a" style="left:0;top:851px;width:1430px;height:7px;background:linear-gradient(180deg,#3a6a92 0,#1d4468 30%,#1d4468 45%,#7aa6cc 60%,#6a98c0 80%,#234c72 100%)"></div>
<div class="a" style="left:0;top:858px;width:1433px;height:41px;background:linear-gradient(100deg,rgba(255,255,255,0) 0,rgba(255,255,255,0) 42%,rgba(255,255,255,.07) 47%,rgba(255,255,255,0) 56%,rgba(255,255,255,0) 76%,rgba(255,255,255,.06) 81%,rgba(255,255,255,0) 88%),linear-gradient(180deg,#163e5c 0,#1d4c6e 4px,#22587e 50%,#1f5377 100%)"></div>
<div class="a" style="left:0;top:858px;width:1433px;height:1px;background:#0a1c2c"></div><div class="a" style="left:0;top:859px;width:1433px;height:1px;background:#3f6c8e"></div>
<div class="a" style="left:363px;top:860px;width:58px;height:38px;box-sizing:border-box;border:1px solid rgba(200,225,245,.65);border-radius:3px;background:linear-gradient(180deg,rgba(255,255,255,.30) 0,rgba(255,255,255,.18) 45%,rgba(255,255,255,.06) 55%,rgba(255,255,255,.12) 100%);box-shadow:0 0 0 1px rgba(10,30,50,.5)"></div>
<div class="a" style="left:425px;top:860px;width:58px;height:38px;box-sizing:border-box;border:1px solid rgba(200,225,245,.65);border-radius:3px;background:linear-gradient(180deg,rgba(255,255,255,.30) 0,rgba(255,255,255,.18) 45%,rgba(255,255,255,.06) 55%,rgba(255,255,255,.12) 100%);box-shadow:0 0 0 1px rgba(10,30,50,.5)"></div>
<div class="a" style="left:487px;top:860px;width:58px;height:38px;box-sizing:border-box;border:1px solid rgba(200,225,245,.65);border-radius:3px;background:linear-gradient(180deg,rgba(255,255,255,.30) 0,rgba(255,255,255,.18) 45%,rgba(255,255,255,.06) 55%,rgba(255,255,255,.12) 100%);box-shadow:0 0 0 1px rgba(10,30,50,.5)"></div>
<div class="a" style="left:549px;top:860px;width:58px;height:38px;box-sizing:border-box;border:1px solid rgba(200,225,245,.65);border-radius:3px;background:linear-gradient(180deg,rgba(255,255,255,.55) 0,rgba(255,255,255,.38) 45%,rgba(255,255,255,.22) 55%,rgba(255,255,255,.30) 100%);box-shadow:0 0 0 1px rgba(10,30,50,.5)"></div>
<svg class="a" style="left:0;top:858px" width="1433" height="41" viewBox="0 0 1433 41">
<defs>
<radialGradient id="orb" cx=".5" cy=".35" r=".7"><stop offset="0" stop-color="#9fd0f0"/><stop offset=".5" stop-color="#3a7ab8"/><stop offset="1" stop-color="#0f2f5a"/></radialGradient>
<linearGradient id="fold" x1="0" y1="0" x2="0" y2="1"><stop offset="0" stop-color="#fbeeb0"/><stop offset="1" stop-color="#e8c860"/></linearGradient>
<linearGradient id="uc" x1="0" y1="0" x2="0" y2="1"><stop offset="0" stop-color="#ff9a2a"/><stop offset="1" stop-color="#f0501a"/></linearGradient>
</defs>
<!-- start orb -->
<circle cx="20" cy="21" r="18.500" fill="url(#orb)" stroke="#0a2440" stroke-width="1"/>
<circle cx="20" cy="21" r="17" fill="none" stroke="#bfe0f8" stroke-width="1" opacity=".7"/>
<path d="M11 14c3-2 5-2 8 0l-1.500 7c-3-2-5-2-8 0z" fill="#f0602a"/>
<path d="M20.500 14.500c3 2 5 2 8 0l-1.500 7c-3 2-5 2-8 0z" fill="#8cc83a"/>
<path d="M9 22.500c3-2 5-2 8 0l-1.500 7c-3-2-5-2-8 0z" fill="#3a9ae0"/>
<path d="M18.500 23c3 2 5 2 8 0l-1.500 7c-3 2-5 2-8 0z" fill="#f8c82a"/>
<!-- IE -->
<text x="81" y="35" font-size="44" font-weight="bold" font-style="italic" fill="#3aa6ea" text-anchor="middle" font-family="Liberation Sans,sans-serif" stroke="#1a6ac0" stroke-width=".6">e</text>
<path d="M68 32c-6 6 2 7 14-1 10-7 16-15 12-18-2-1.500-6 0-9 2" fill="none" stroke="#f4c22a" stroke-width="2.600"/>
<!-- explorer -->
<path d="M128 12h10l2 3h18v20h-30z" fill="#e8c870" stroke="#c8a040" stroke-width=".8"/>
<path d="M130 15h28v19h-28z" fill="url(#fold)" stroke="#d8b050" stroke-width=".6"/>
<rect x="132" y="11" width="3" height="2" fill="#30b030"/><rect x="140" y="13" width="3" height="2" fill="#d03030"/><rect x="148" y="14" width="3" height="2" fill="#3070e0"/>
<path d="M133 27h22l3 3v5h-28v-5z" fill="#9ac4ec" stroke="#5a8ac8" stroke-width=".8"/><rect x="136" y="31" width="16" height="5" fill="#d8e8f8"/>
<!-- media player -->
<path d="M193 10l22-2v27l-22-2z" fill="#c4d8ec" stroke="#7a9ac0" stroke-width=".8"/><path d="M215 8l2 1v26l-2 1z" fill="#8aa8cc"/>
<circle cx="203" cy="22" r="9" fill="#f07a1a"/><circle cx="203" cy="22" r="9" fill="none" stroke="#ffb060" stroke-width="1"/><path d="M200 16.500v11l9-5.500z" fill="#fff"/>
<!-- blue TV (pptv-like) -->
<path d="M254 12l3-5 4 5zM280 12l-3-5-4 5z" fill="#1a9ae8"/>
<ellipse cx="267" cy="22" rx="16" ry="11.500" fill="#1a9ae8"/><path d="M258 31l-2 5 8-3z" fill="#1a9ae8"/>
<ellipse cx="267" cy="21" rx="10.500" ry="6.500" fill="#fff"/><path d="M264 17.500v7l6.500-3.500z" fill="#1a9ae8"/>
<!-- K -->
<circle cx="330" cy="22" r="14" fill="#1a8ae0" stroke="#fff" stroke-width="2"/>
<text x="330" y="30" font-size="22" font-weight="bold" fill="#fff" text-anchor="middle" font-family="Liberation Sans,sans-serif">K</text>
<!-- Sogou S -->
<circle cx="392" cy="21" r="15" fill="#fff" stroke="#d0e4f8" stroke-width="1"/>
<circle cx="392" cy="21" r="13.500" fill="#2a7ae0"/>
<path d="M398 9c-8-2-14 3-11 8s11 4 9 9-8 5-13 2" fill="none" stroke="#fff" stroke-width="5" stroke-linecap="round"/>
<!-- UC -->
<rect x="438" y="5" width="32" height="32" rx="7" fill="url(#uc)"/>
<path d="M447 14c2-4 7-5 9-1 3-1 6 0 7 3l-3 1c2 3 0 6-3 7 1 3-1 6-4 6-4 0-6-4-4-7-3-2-4-6-2-9z" fill="#fff"/>
<circle cx="455" cy="26" r="3.500" fill="#f0601a"/><circle cx="455" cy="26" r="1.600" fill="#fff"/>
<!-- 360zip -->
<path d="M501 10l4-4h12l3 3h12v10h-31z" fill="#5ab0f4"/>
<rect x="501" y="19" width="31" height="6" fill="#4a98e8"/><rect x="501" y="25" width="31" height="5" fill="#78c840"/><rect x="501" y="30" width="31" height="5" fill="#f09a28"/>
<rect x="520" y="6" width="7" height="30" fill="#8a4a1a"/><rect x="518.500" y="23" width="10" height="8" fill="#e8b830" stroke="#8a4a1a" stroke-width="1"/><rect x="521.500" y="25.500" width="4" height="3" fill="#8a4a1a"/>
<!-- AutoCAD -->
<rect x="562" y="4" width="31" height="32" fill="#1a8a7a"/><rect x="562" y="4" width="31" height="32" fill="none" stroke="#fff" stroke-width="1"/>
<path d="M565 33l9-26h4l6 26" fill="none" stroke="#e8f8f4" stroke-width="3.500"/><path d="M567 28h14" stroke="#e8f8f4" stroke-width="2.500"/>
<path d="M586 4v32M562 26h31" stroke="#fff" stroke-width="1.600"/><rect x="583" y="23" width="6" height="6" fill="#1a8a7a" stroke="#fff" stroke-width="1.400"/>
<!-- tray -->
<g font-family="Liberation Mono,monospace" fill="#fff"><text x="983" y="24" font-size="12" textLength="13" lengthAdjust="spacingAndGlyphs">CH</text></g>
<rect x="1004" y="17" width="15" height="9" rx="1.500" fill="#c8c8c0" stroke="#707068" stroke-width=".8"/><path d="M1006 20h11M1006 23h11" stroke="#707068" stroke-width=".8" stroke-dasharray="1.500 1"/><path d="M1010 17c0-3 4-2 6-4" stroke="#a0a098" fill="none"/>
<circle cx="1034" cy="21" r="7.500" fill="#1a3ac0" stroke="#c8d0f0" stroke-width="1.200"/><text x="1034" y="25.500" font-size="12" font-weight="bold" fill="#fff" text-anchor="middle" font-family="Liberation Sans,sans-serif">?</text>
<rect x="1054.500" y="14.500" width="5" height="4" fill="none" stroke="#fff" stroke-width="1"/><rect x="1052.500" y="16.500" width="5" height="4" fill="#1d4a72" stroke="#fff" stroke-width="1"/><path d="M1052 26h6l-3 3z" fill="#fff"/>
<g font-family="Liberation Sans,Noto Sans CJK SC,sans-serif" fill="#fff" font-size="12" text-anchor="middle"><text x="1107" y="17.500">28℃</text><text x="1107" y="34.500">CPU温度</text><text x="1380" y="17.500">22:11</text><text x="1380" y="34.500">2015/12/27</text></g>
<!-- nvidia -->
<rect x="1151" y="14" width="16" height="14" rx="1.500" fill="#222" stroke="#555" stroke-width=".6"/><path d="M1153 21c2-4 8-5 12-1-3 4-9 4-12 1z" fill="none" stroke="#76b900" stroke-width="1.500"/><circle cx="1158.500" cy="21" r="1.800" fill="#76b900"/>
<!-- QQ -->
<ellipse cx="1182" cy="22" rx="5" ry="6.500" fill="#111"/><ellipse cx="1182" cy="25" rx="3.200" ry="3.500" fill="#fff"/><path d="M1176 24l-2.500 4 3-1zM1188 24l2.500 4-3-1z" fill="#111"/><path d="M1177.500 21.500c3 1.500 6 1.500 9 0l.5 2c-3.500 1.500-6.500 1.500-10 0z" fill="#e82020"/><path d="M1178 29.500h3.500v-1.500zM1186 29.500h-3.500v-1.500z" fill="#f0a020"/><ellipse cx="1182" cy="19.800" rx="1.800" ry=".9" fill="#f0a020"/>
<!-- usb -->
<rect x="1201" y="12" width="6" height="5" fill="#b0b0b0"/><path d="M1199.500 17h9v9l-2 3h-5l-2-3z" fill="#8a8a8a" stroke="#606060" stroke-width=".6"/><circle cx="1209" cy="26" r="4" fill="#28a828"/><path d="M1207 26l1.600 1.600 2.600-3" fill="none" stroke="#fff" stroke-width="1.300"/>
<!-- red speaker -->
<path d="M1224 18h4l6-5v17l-6-5h-4z" fill="#e85030" stroke="#a02010" stroke-width=".6"/><path d="M1236.500 16c2 3 2 8 0 11M1239.500 14c3 4 3 11 0 15" fill="none" stroke="#c04030" stroke-width="1"/>
<!-- user -->
<circle cx="1259" cy="17" r="4.500" fill="#e8c8a0"/><path d="M1254 16c1-5 9-5 10 0" fill="#7a5a3a"/><path d="M1251 30c0-7 16-7 16 0z" fill="#3aa080"/><circle cx="1254" cy="26" r="3.500" fill="#f0f0f0" stroke="#a0a0a0" stroke-width=".5"/>
<!-- blue bird -->
<rect x="1275" y="12" width="16" height="17" fill="#1a8ad8"/><path d="M1277 29c1-7 4-11 8-12l2 3 3-1c-1 5-4 8-6 11z" fill="#fff"/><circle cx="1285" cy="18" r="1" fill="#111"/>
<!-- network -->
<rect x="1307.500" y="16.500" width="11" height="9" fill="#1d4a72" stroke="#fff" stroke-width="1.300"/><path d="M1309 29h8M1313 26v3" stroke="#fff" stroke-width="1.300"/><path d="M1303 13v8h3v-8M1304.500 21v5" stroke="#fff" stroke-width="1.200" fill="none"/>
<!-- speaker -->
<path d="M1325 19h3l5-5v15l-5-5h-3z" fill="#fff"/><path d="M1336 18c1.500 2 1.500 5 0 7" fill="none" stroke="#fff" stroke-width="1.200"/>
</svg>
<div class="a" style="left:1421px;top:859px;width:12px;height:40px;background:linear-gradient(180deg,rgba(255,255,255,.25),rgba(255,255,255,.05));border-left:1px solid rgba(10,30,50,.6)"></div>
<div class="a" style="left:1416px;top:797px;width:17px;height:64px;background:#e8f0f8;border-radius:7px;box-shadow:0 0 1px #9ab"></div>
<div class="a" style="left:1419px;top:802px;width:11px;height:56px;background:#2f8ad8;border-radius:1px"></div>
<div class="a" style="left:1422px;top:805px;width:5px;height:2px;background:#5a9adc"></div><div class="a" style="left:1422px;top:808px;width:5px;height:2px;background:#5a9adc"></div><div class="a" style="left:1422px;top:811px;width:5px;height:2px;background:#5a9adc"></div><div class="a" style="left:1422px;top:814px;width:5px;height:2px;background:#5a9adc"></div><div class="a" style="left:1422px;top:817px;width:5px;height:2px;background:#5a9adc"></div><div class="a" style="left:1422px;top:820px;width:5px;height:2px;background:#5a9adc"></div><div class="a" style="left:1422px;top:823px;width:5px;height:2px;background:#5a9adc"></div><div class="a" style="left:1422px;top:826px;width:5px;height:2px;background:#50f020"></div><div class="a" style="left:1422px;top:830px;width:5px;height:2px;background:#50f020"></div><div class="a" style="left:1422px;top:834px;width:5px;height:2px;background:#50f020"></div><div class="a" style="left:1422px;top:838px;width:5px;height:2px;background:#50f020"></div><div class="a" style="left:1422px;top:842px;width:5px;height:2px;background:#50f020"></div><div class="a" style="left:1422px;top:846px;width:5px;height:2px;background:#50f020"></div><div class="a" style="left:1422px;top:850px;width:5px;height:2px;background:#50f020"></div><div class="a" style="left:1422px;top:854px;width:5px;height:2px;background:#50f020"></div>
</body></html>
